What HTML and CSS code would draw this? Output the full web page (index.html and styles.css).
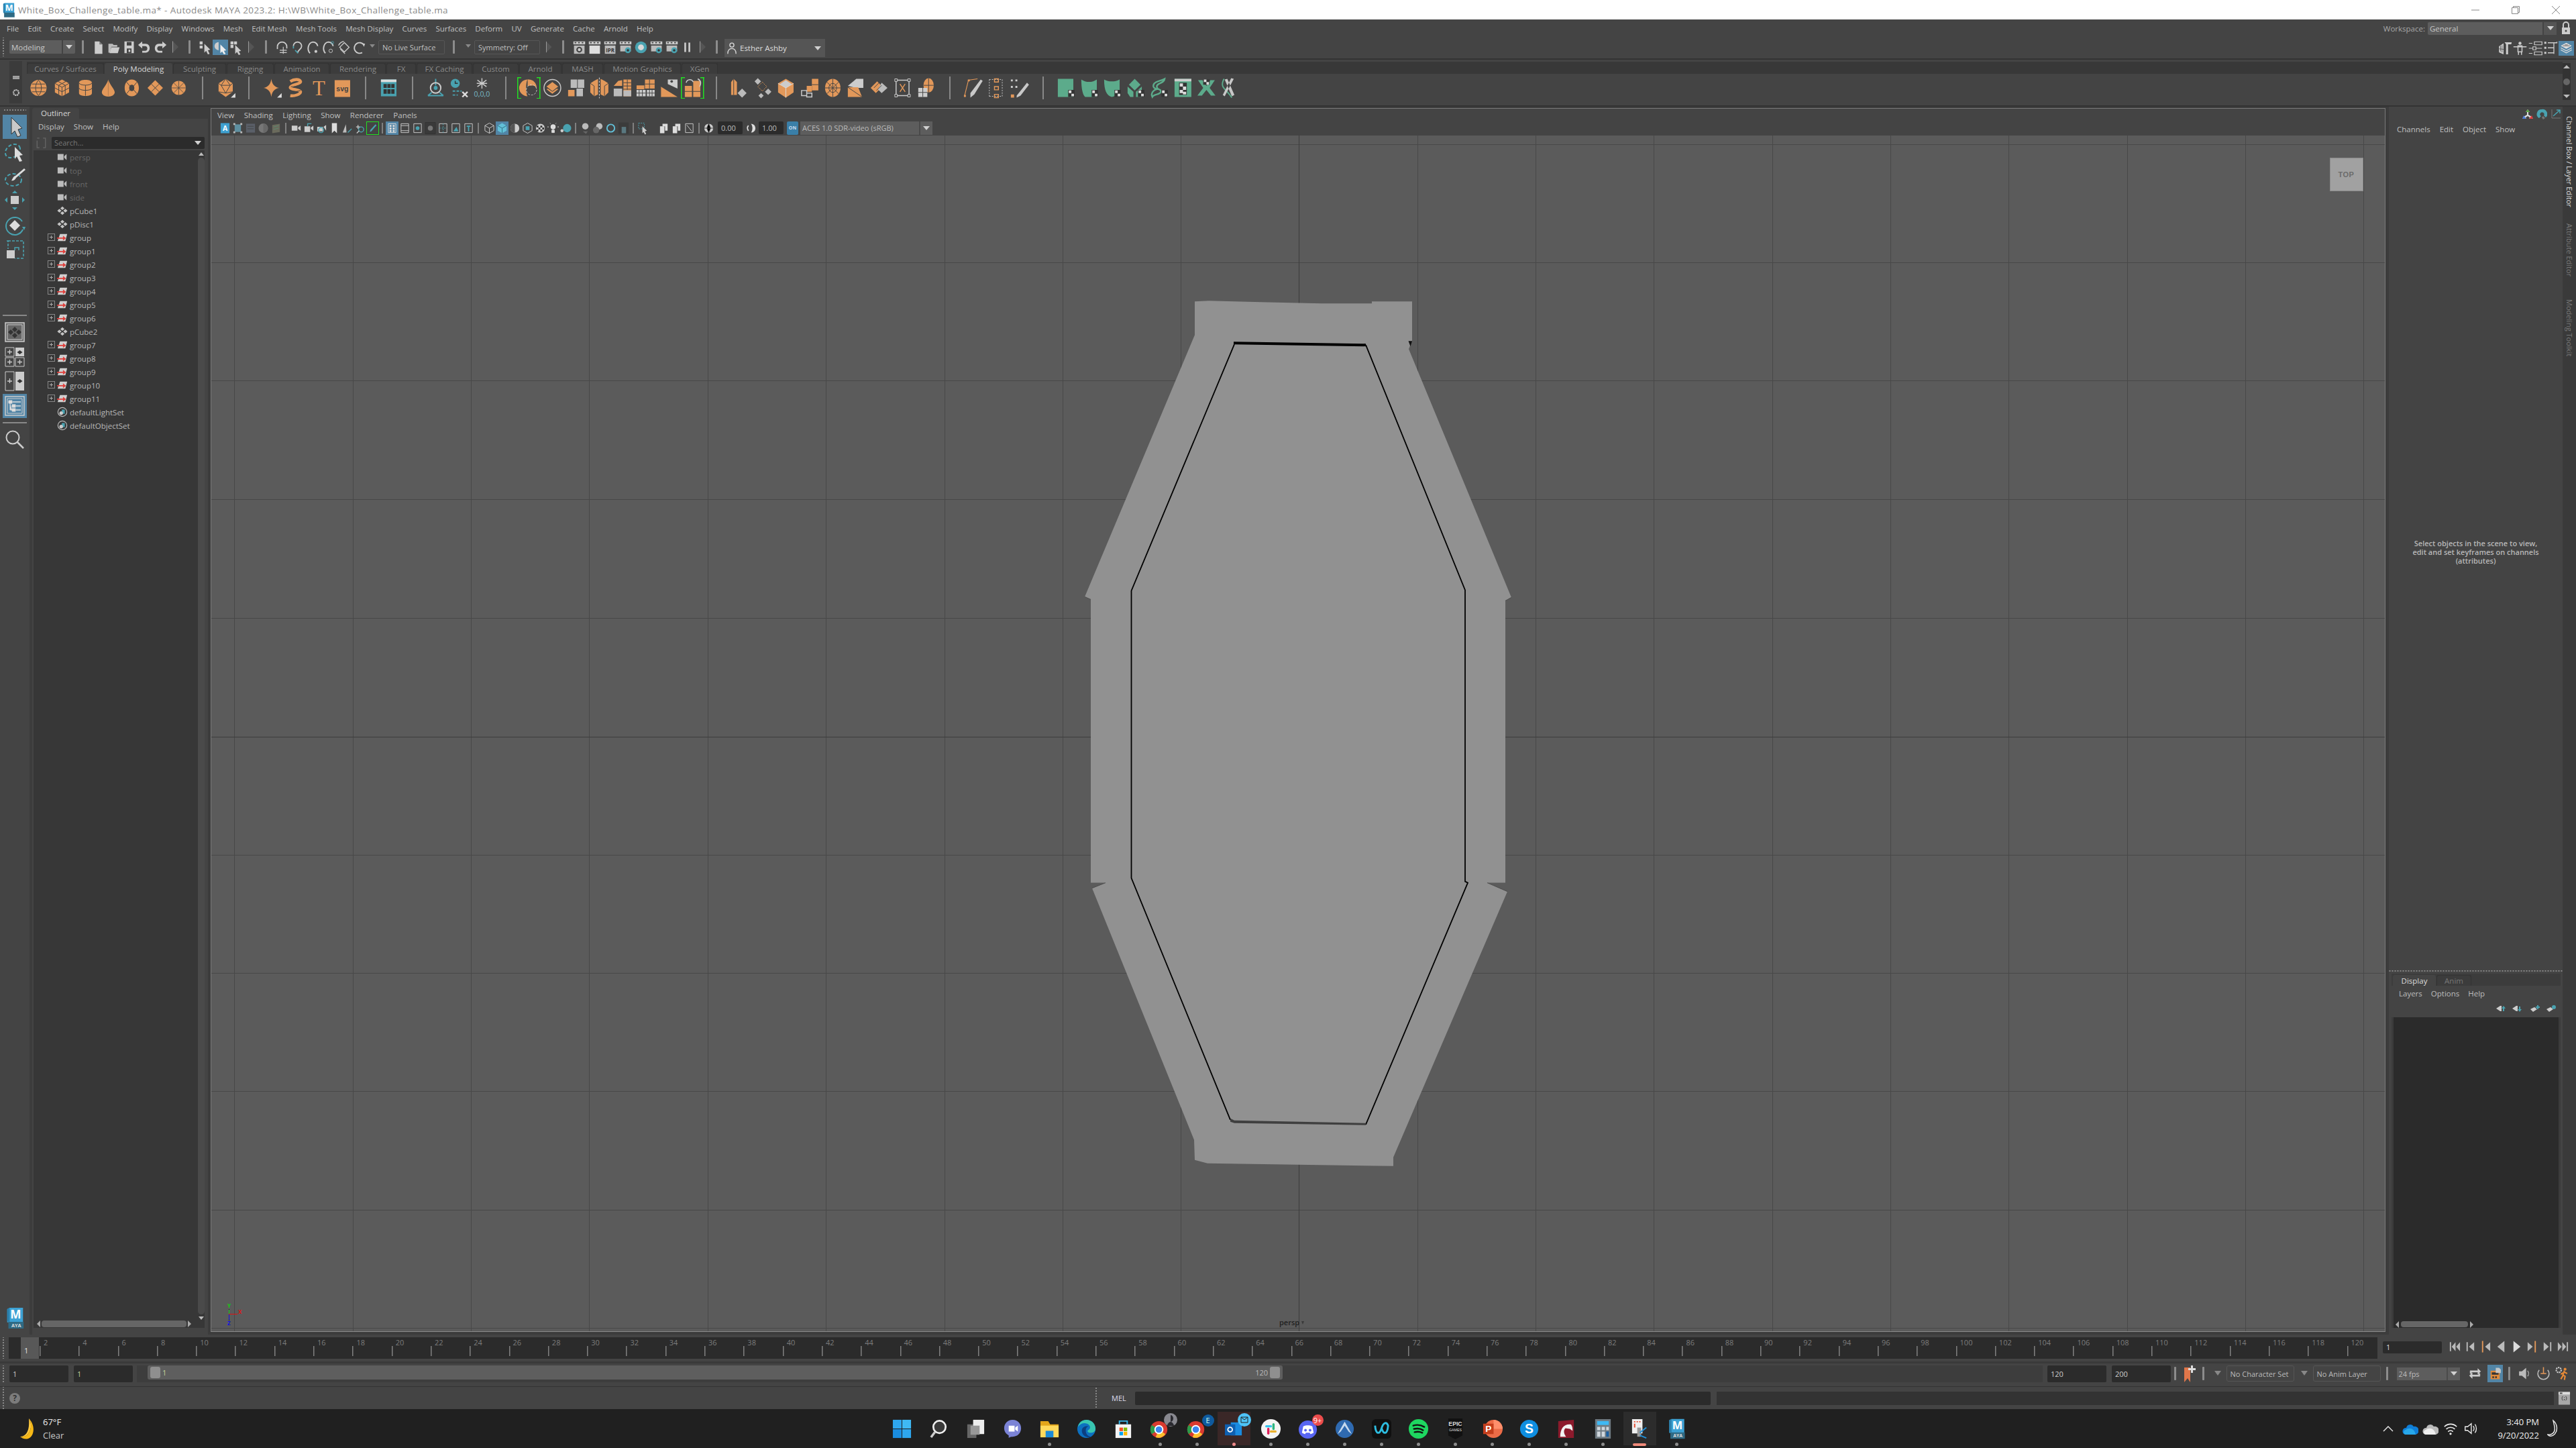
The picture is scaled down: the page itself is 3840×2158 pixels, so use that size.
FILE: index.html
```html
<!DOCTYPE html>
<html lang="en">
<head>
<meta charset="utf-8">
<title>Autodesk MAYA 2023.2</title>
<link rel="stylesheet" href="styles.css">
</head>
<body>
<svg class="defs" xmlns="http://www.w3.org/2000/svg">
<symbol id="sphere" viewBox="0 0 32 32"><circle cx="16" cy="16" r="12.5" fill="#e2985a"/><path d="M6 10h20M4 16h24M6 22h20M16 4c-6 6-6 18 0 24M16 4c6 6 6 18 0 24" fill="none" stroke="#444" stroke-width="1"/></symbol>
<symbol id="cube" viewBox="0 0 32 32"><path d="M16 3l11 6v14l-11 6-11-6V9z" fill="#e2985a"/><path d="M5 9l11 6 11-6M16 15v14M10 6l11 6v14M22 6l-11 6v14M5 16l11 6 11-6" fill="none" stroke="#444"/></symbol>
<symbol id="cyl" viewBox="0 0 32 32"><path d="M6 8c0-6 20-6 20 0v16c0 6-20 6-20 0z" fill="#e2985a"/><path d="M6 8c0 5 20 5 20 0M6 16c0 5 20 5 20 0M16 12v16" fill="none" stroke="#444"/></symbol>
<symbol id="cone" viewBox="0 0 32 32"><path d="M16 3c2 8 10 15 10 20a10 6.500 0 0 1-20 0C6 18 14 11 16 3z" fill="#e2985a"/><path d="M16 3v26" stroke="#444" stroke-width=".6" opacity=".5"/></symbol>
<symbol id="torus" viewBox="0 0 32 32"><path d="M16 3c7 0 11 6 11 13s-4 13-11 13S5 23 5 16 9 3 16 3zm0 8c-2.500 0-4 2-4 5s1.500 5 4 5 4-2 4-5-1.500-5-4-5z" fill="#e2985a" fill-rule="evenodd"/><path d="M8 7l5 6M24 7l-5 6M8 25l5-6M24 25l-5-6" stroke="#444"/></symbol>
<symbol id="plane" viewBox="0 0 32 32"><path d="M16 4l12 12-12 12L4 16z" fill="#e2985a"/><path d="M10 10l12 12M22 10L10 22" stroke="#444"/></symbol>
<symbol id="disc" viewBox="0 0 32 32"><circle cx="16" cy="16" r="11" fill="#e2985a"/><path d="M5 16h22M16 5v22M8 8l16 16M24 8L8 24" stroke="#444" stroke-width=".8"/></symbol>
<symbol id="poly" viewBox="0 0 32 32"><path d="M16 2l11 7v13l-11 8-11-8V9z" fill="#e2985a"/><path d="M16 2l-7 10 7 12 7-12zM5 9l4 3M27 9l-4 3M5 22l11 2 11-2M9 12h14" fill="none" stroke="#444"/><path d="M31 31h-7l7-7z" fill="#ddd"/></symbol>
<symbol id="star" viewBox="0 0 32 32"><path d="M15 2c1 8 5 13 12 14-7 1-11 6-12 14-1-8-5-13-12-14 7-1 11-6 12-14z" fill="#e2985a"/><path d="M31 31h-7l7-7z" fill="#ddd"/></symbol>
<symbol id="helix" viewBox="0 0 32 32"><path d="M8 6c6-4 14-4 16 0 1 4-15 5-16 9-1 4 15 3 16 7 0 4-10 7-16 6" fill="none" stroke="#e2985a" stroke-width="4.500"/><path d="M9 14c4 1 10-1 15-3M8 23c5 0 11-2 16-3" stroke="#444" fill="none"/></symbol>
<symbol id="winteal" viewBox="0 0 32 32"><rect x="4" y="3" width="24" height="26" fill="#49a2b0"/><rect x="4" y="3" width="24" height="4" fill="#ddd"/><path d="M8 10h5v6H8zM14 10h5v6h-5zM20 10h5v6h-5zM8 18h5v7H8zM14 18h5v7h-5zM20 18h5v7h-5z" fill="#333"/></symbol>
<symbol id="lattice" viewBox="0 0 32 32"><path d="M16 2v10" stroke="#49a2b0" stroke-width="2"/><circle cx="16" cy="16" r="8" fill="none" stroke="#ccc" stroke-width="2"/><circle cx="16" cy="16" r="3" fill="#49a2b0"/><path d="M4 28l6-5M28 28l-6-5M4 28h24" fill="none" stroke="#49a2b0" stroke-width="2"/></symbol>
<symbol id="clock" viewBox="0 0 32 32"><circle cx="10" cy="9" r="7" fill="#49a2b0"/><path d="M10 5v4h4" stroke="#333" fill="none" stroke-width="1.500"/><path d="M6 21h14M6 27h8" stroke="#49a2b0" stroke-width="2" stroke-dasharray="4 2"/><path d="M21 22l8 8M29 22l-8 8" stroke="#ddd" stroke-width="2.500"/></symbol>
<symbol id="snow" viewBox="0 0 32 32"><path d="M16 1v16M9 4l14 10M23 4L9 14M8 9h16" stroke="#ccc" stroke-width="1.500"/><text x="16" y="29" font-family="Open Sans" font-size="11" fill="#79b8c4" text-anchor="middle">0,0,0</text></symbol>
<symbol id="halfc" viewBox="0 0 32 32"><path d="M14 3a13 13 0 0 0 0 26c-3-4-3-22 0-26z" fill="#e2985a"/><path d="M14 3c8-1 14 5 14 13" fill="#e2985a"/><path d="M14 3a13 13 0 0 1 12 9l-12 1z" fill="#e2985a"/><circle cx="20" cy="19" r="8" fill="none" stroke="#ccc" stroke-dasharray="3 2"/></symbol>
<symbol id="circdia" viewBox="0 0 32 32"><circle cx="16" cy="16" r="13" fill="none" stroke="#ccc" stroke-width="1.500"/><path d="M16 7l9 7-9 7-9-7z" fill="#e2985a"/><path d="M7 18l9 7 9-7-2-1-7 5-7-5z" fill="#e2985a"/></symbol>
<symbol id="booln" viewBox="0 0 32 32"><path d="M4 19h10v10H4z" fill="#e2985a"/><path d="M8 3h10v13H8zM19 3h10v13H19zM17 17h10v12H17z" fill="#bbb"/></symbol>
<symbol id="mirror" viewBox="0 0 32 32"><path d="M8 5l6-3v24l-6 3-6-6V9z" fill="#e2985a"/><path d="M24 5l-6-3v24l6 3 6-6V9z" fill="#e2985a"/><path d="M16 0v32" stroke="#ddd" stroke-dasharray="3 2"/><path d="M2 9l6 4v16M30 9l-6 4v16" stroke="#444" fill="none"/></symbol>
<symbol id="grid1" viewBox="0 0 32 32"><path d="M3 17h13v12H3z" fill="#bbb"/><path d="M3 13h13V4l-6 1z" fill="#e2985a"/><path d="M18 3h12v26H18z" fill="#e2985a"/><path d="M18 8h12M18 13h12M18 18h12M24 3v16" stroke="#444"/><path d="M18 20h12v9H18z" fill="#bbb"/></symbol>
<symbol id="grid2" viewBox="0 0 32 32"><path d="M15 3h15v14H15z" fill="#e2985a"/><path d="M2 12h12v6H2z" fill="#e2985a"/><path d="M22 3v14M15 10h15" stroke="#444"/><path d="M2 19h14v10H2z" fill="#ccc"/><path d="M6 19v10M11 19v10M2 24h14" stroke="#444"/><path d="M18 19h12v10H18z" fill="#ccc"/><path d="M22 19v10M26 19v10M18 24h12" stroke="#444"/></symbol>
<symbol id="wedge" viewBox="0 0 32 32"><path d="M3 14l26 16H3z" fill="#e2985a"/><path d="M3 30V14" stroke="#444"/><path d="M14 3h15v14l-15-7z" fill="#ccc"/><circle cx="20" cy="6" r="2" fill="#444"/></symbol>
<symbol id="quadarr" viewBox="0 0 32 32"><path d="M4 13h11v8H4zM17 5h11v16H17zM4 22h11v8H4zM17 22h11v8H17z" fill="#e2985a"/><path d="M6 8c2-6 9-6 11-1" fill="none" stroke="#ccc" stroke-width="1.500"/><path d="M27 14c3-6 1-10-3-12" fill="none" stroke="#ccc" stroke-width="1.500"/></symbol>
<symbol id="extr" viewBox="0 0 32 32"><path d="M8 2l5 5v20H4V7z" fill="#e2985a"/><path d="M8 2v25" stroke="#444"/><path d="M21 17l7 7-7 7-7-7z" fill="#bbb"/></symbol>
<symbol id="bridge" viewBox="0 0 32 32"><path d="M9 1l5 5-5 5-5-5zM25 17l5 5-5 5-5-5zM14 24l4 4-4 4-4-4z" fill="#bbb"/><path d="M16 7l7 7-7 7-7-7z" fill="none" stroke="#e2985a" stroke-dasharray="2 1.500"/></symbol>
<symbol id="bevel" viewBox="0 0 32 32"><path d="M16 2l12 7v14l-12 8-12-8V9z" fill="#e2985a"/><path d="M16 4l9 6-9 6-9-6z" fill="#ccc"/><path d="M16 16v15M4 9l12 7 12-7" stroke="#ddd" fill="none"/></symbol>
<symbol id="combine" viewBox="0 0 32 32"><path d="M20 2h10v18H20z" fill="#e2985a"/><path d="M12 13h8v9h-8z" fill="#e2985a"/><path d="M20 11h10" stroke="#444"/><path d="M4 20h8v8H4zM12 24h8v6h-8z" fill="none" stroke="#ccc" stroke-width="1.500"/></symbol>
<symbol id="globe" viewBox="0 0 32 32"><ellipse cx="16" cy="16" rx="12" ry="14" fill="#e2985a"/><path d="M4 16h24M16 2v28M7 7l18 18M25 7L7 25" stroke="#444"/><ellipse cx="16" cy="16" rx="6" ry="7" fill="none" stroke="#444"/></symbol>
<symbol id="cut" viewBox="0 0 32 32"><path d="M4 13l13-11h11v14H17z" fill="#ccc"/><path d="M4 15h16l6 15H4z" fill="#e2985a"/><path d="M4 15l22 15" stroke="#444"/></symbol>
<symbol id="smalld" viewBox="0 0 32 32"><path d="M3 16l10-10 8 8-10 10z" fill="#e2985a"/><path d="M20 8l9 8-9 8-6-6z" fill="#bbb"/><path d="M8 16l8-8M12 20l8-8" stroke="#444"/></symbol>
<symbol id="boxdots" viewBox="0 0 32 32"><path d="M6 4h20v24H6z" fill="none" stroke="#ccc" stroke-width="1.500"/><path d="M12 10l8 12M20 10l-8 12" stroke="#e2985a" stroke-width="1.500"/><path d="M4 2h4v4H4zM24 2h4v4h-4zM4 26h4v4H4zM24 26h4v4h-4z" fill="#444" stroke="#ccc"/></symbol>
<symbol id="sgrid" viewBox="0 0 32 32"><ellipse cx="20" cy="12" rx="8" ry="11" fill="#e2985a"/><path d="M12 12h16M20 1v22" stroke="#444"/><path d="M4 16h14v14H4z" fill="#ccc"/><path d="M4 23h14M11 16v14" stroke="#444"/></symbol>
<symbol id="knife1" viewBox="0 0 32 32"><path d="M3 28l6-24 14-2" fill="none" stroke="#e2985a" stroke-width="1.200"/><path d="M12 24L28 3l3 2-13 21-6 5z" fill="#c8c8c8"/><path d="M2 27h3v3H2zM8 3h3v3H8z" fill="#e2985a"/></symbol>
<symbol id="knife2" viewBox="0 0 32 32"><path d="M6 3v26M26 3v26M6 3h20M6 29h20" fill="none" stroke="#ccc" stroke-dasharray="2 2"/><path d="M14 2h6v5h-6zM14 14h6v5h-6zM14 26h6v5h-6z" fill="none" stroke="#e2985a" stroke-width="1.500"/></symbol>
<symbol id="knife3" viewBox="0 0 32 32"><path d="M3 3h3v3H3zM10 3h3v3h-3zM3 13h3v3H3zM10 13h3v3h-3z" fill="#ccc"/><path d="M3 26h5v5H3z" fill="#e2985a"/><path d="M12 28l16-20 3 3-13 17-6 3z" fill="#c8c8c8"/></symbol>
<symbol id="g1" viewBox="0 0 32 32"><path d="M3 2h24v28H3z" fill="#5cab8b"/><path d="M19 19h10v11H19z" fill="#333"/><path d="M20 20h4v4h-4zM24 25h4v4h-4z" fill="#ddd"/></symbol>
<symbol id="g2" viewBox="0 0 32 32"><path d="M3 3c7 5 17 5 24 0v27H9c-4-3-6-14-6-27z" fill="#5cab8b"/><path d="M19 19h10v11H19z" fill="#333"/><path d="M20 20h4v4h-4zM24 25h4v4h-4z" fill="#ddd"/></symbol>
<symbol id="g3" viewBox="0 0 32 32"><path d="M3 3c7 4 17 4 24 0v19c-3 4-7 7-12 8-8-2-12-10-12-27z" fill="#5cab8b"/><path d="M19 19h10v11H19z" fill="#333"/><path d="M20 20h4v4h-4zM24 25h4v4h-4z" fill="#ddd"/></symbol>
<symbol id="g4" viewBox="0 0 32 32"><path d="M14 2l9 9-9 9-9-9zM3 14l9 8v8H7l-4-6zM25 14v16h-9v-8z" fill="#5cab8b"/><path d="M19 19h10v11H19z" fill="#333"/><path d="M20 20h4v4h-4zM24 25h4v4h-4z" fill="#ddd"/></symbol>
<symbol id="g5" viewBox="0 0 32 32"><path d="M24 2c-1 8-14 6-12 13 1 5 7 2 6 7s-10 3-13 8c-3-6 2-11 7-12-3-1-8-3-4-9 4-4 9-3 16-7z" fill="none" stroke="#5cab8b" stroke-width="2.500"/><path d="M19 19h10v11H19z" fill="#333"/><path d="M20 20h4v4h-4zM24 25h4v4h-4z" fill="#ddd"/></symbol>
<symbol id="g6" viewBox="0 0 32 32"><path d="M3 2h26v28H3z" fill="#5cab8b"/><path d="M3 2h26v4H3z" fill="#ccc"/><path d="M10 8h12v19H10z" fill="#333"/><path d="M11 9h5v5h-5zM16 14h5v5h-5zM11 19h5v5h-5zM16 22h5v4h-5z" fill="#ddd"/></symbol>
<symbol id="g7" viewBox="0 0 32 32"><path d="M2 28L11 16 3 4h7l6 9 6-9h7l-8 12 9 12h-7l-7-9-7 9z" fill="#5cab8b"/><path d="M11 3h10v8H11z" fill="#333"/><path d="M12 3h4v4h-4zM16 7h4v4h-4z" fill="#ddd"/></symbol>
<symbol id="g8" viewBox="0 0 32 32"><path d="M8 2c-8 14 4 16 12 29" fill="none" stroke="#5cab8b" stroke-width="2"/><path d="M9 3l11 26 4-2L13 2zM23 2L9 29l-3-2L19 1z" fill="#c8c8c8"/></symbol>
<symbol id="newf" viewBox="0 0 24 24"><path d="M6 2h8l5 5v16H6z" fill="#ccc"/><path d="M14 2v5h5" fill="#777"/></symbol>
<symbol id="openf" viewBox="0 0 24 24"><path d="M3 6h7l2 2h6v3H8l-2 10H3z" fill="#bbb"/><path d="M8 12h14l-3 10H5z" fill="#ccc"/></symbol>
<symbol id="savef" viewBox="0 0 24 24"><path d="M4 2h16v20H4z" fill="#ccc"/><path d="M8 3h8v6H8z" fill="#444"/><path d="M8 14h8v8H8z" fill="#444"/><path d="M11 16h3v4h-3z" fill="#ccc"/></symbol>
<symbol id="undo" viewBox="0 0 24 24"><path d="M8 6v-4L1 8l7 6v-4h5c5 0 5 8 0 8H8v3h6c9 0 9-15 0-15z" fill="#ccc"/></symbol>
<symbol id="redo" viewBox="0 0 24 24"><path d="M16 6V2l7 6-7 6v-4h-5c-5 0-5 8 0 8h5v3h-6C1 21 1 6 10 6z" fill="#ccc"/></symbol>
<symbol id="selh" viewBox="0 0 24 24"><path d="M3 2h5v5H3zM3 9h5v5H3z" fill="#ccc"/><path d="M11 6l10 10-4 1 3 6-3 1-3-6-3 3z" fill="#ccc"/></symbol>
<symbol id="selo" viewBox="0 0 24 24"><path d="M9 3a6 6 0 1 0 0 14" fill="#ccc"/><path d="M12 7l10 10-4 1 3 5-3 1-3-5-3 3z" fill="#eee"/></symbol>
<symbol id="selc" viewBox="0 0 24 24"><path d="M3 2h5v5H3zM9 2h5v5H9zM3 8h5v5H3z" fill="#ccc"/><path d="M11 8l10 10-4 1 3 5-3 1-3-5-3 3z" fill="#ccc"/></symbol>
<symbol id="snap" viewBox="0 0 24 24"><path d="M4 11a8 8 0 0 1 16 0v3" fill="none" stroke="#ccc" stroke-width="2"/><path d="M4 11v4" stroke="#ccc" stroke-width="2"/><path d="M8 17h12M14 11v12M8 21h12" stroke="#ccc" stroke-width="1.300"/></symbol>
<symbol id="snap2" viewBox="0 0 24 24"><path d="M5 10a7 7 0 0 1 14 0c0 6-7 6-7 12" fill="none" stroke="#ccc" stroke-width="2"/><path d="M5 10v4M8 17l5 5" stroke="#49a2b0" stroke-width="2"/></symbol>
<symbol id="snap3" viewBox="0 0 24 24"><path d="M7 22C1 16 4 4 12 3c5 0 8 4 8 7" fill="none" stroke="#ccc" stroke-width="2.200"/><circle cx="17" cy="19" r="2.400" fill="#ccc"/></symbol>
<symbol id="snap4" viewBox="0 0 24 24"><path d="M7 22C1 16 4 4 12 3c5 0 8 4 8 7" fill="none" stroke="#ccc" stroke-width="2.200"/><circle cx="19" cy="4" r="2" fill="none" stroke="#49a2b0"/><circle cx="16" cy="18" r="3" fill="none" stroke="#ccc"/></symbol>
<symbol id="snap5" viewBox="0 0 24 24"><path d="M5 12L13 4l8 8-8 8z" fill="none" stroke="#ccc" stroke-width="1.500"/><path d="M3 9c2-5 7-7 9-7M6 15l8 8" stroke="#ccc" stroke-width="1.500" fill="none"/></symbol>
<symbol id="snap6" viewBox="0 0 24 24"><path d="M17 21A9 9 0 1 1 20 8" fill="none" stroke="#ccc" stroke-width="2.200"/><path d="M17 5l5 1-2 5z" fill="#ccc"/></symbol>
<symbol id="rclap" viewBox="0 0 24 24"><path d="M2 2h20v5H2z" fill="#ccc"/><path d="M4 3h3v2H4zM10 3h3v2h-3zM16 3h3v2h-3z" fill="#444"/><path d="M3 9h18v14H3z" fill="#bbb"/><circle cx="12" cy="16" r="5" fill="#444"/><circle cx="12" cy="16" r="2.500" fill="#ccc"/></symbol>
<symbol id="rclap2" viewBox="0 0 24 24"><path d="M2 2h20v5H2z" fill="#ccc"/><path d="M4 3h3v2H4zM10 3h3v2h-3zM16 3h3v2h-3z" fill="#444"/><path d="M3 9h18v14H3z" fill="#ddd"/></symbol>
<symbol id="ripr" viewBox="0 0 24 24"><path d="M2 2h20v5H2z" fill="#ccc"/><path d="M4 3h3v2H4zM10 3h3v2h-3zM16 3h3v2h-3z" fill="#444"/><path d="M3 9h18v14H3z" fill="#bbb"/><text x="12" y="20" text-anchor="middle" font-size="9" font-family="Open Sans" font-weight="700" fill="#333">IPR</text></symbol>
<symbol id="rgear" viewBox="0 0 24 24"><path d="M2 2h20v5H2z" fill="#ccc"/><path d="M4 3h3v2H4zM10 3h3v2h-3zM16 3h3v2h-3z" fill="#444"/><path d="M3 9h18v10H3z" fill="#bbb"/><circle cx="16" cy="17" r="5" fill="#49a2b0"/><circle cx="16" cy="17" r="2" fill="#333"/></symbol>
<symbol id="rorb" viewBox="0 0 24 24"><circle cx="12" cy="12" r="10" fill="#49a2b0"/><circle cx="12" cy="12" r="5" fill="#d8d8d8"/></symbol>
<symbol id="pause" viewBox="0 0 24 24"><path d="M7 4h3v16H7zM14 4h3v16h-3z" fill="#ccc"/></symbol>
<symbol id="cam" viewBox="0 0 18 18"><path d="M1 4h10v10H1zM12 8l4-4v10l-4-4z" fill="currentColor"/></symbol>
<symbol id="xf" viewBox="0 0 18 18"><path d="M9 2l3.500 3L9 8 5.500 5zM4 6l3.500 3L4 12 .5 9zM14 6l3.500 3-3.500 3-3.500-3zM9 10l3.500 3L9 16l-3.500-3z" fill="#c4c4c4"/></symbol>
<symbol id="grp" viewBox="0 0 18 18"><path d="M5 3h12l-3 12H1z" fill="#d0d0d0"/><path d="M0 9h10V6l5 4-5 4v-3H0z" fill="#e0403c"/></symbol>
<symbol id="setic" viewBox="0 0 18 18"><circle cx="9" cy="9" r="7.500" fill="none" stroke="#bbb" stroke-width="1.300"/><path d="M8 5h5v7H8z" fill="#49a2b0"/><circle cx="7" cy="11" r="3" fill="#ccc"/></symbol>
<symbol id="tsel" viewBox="0 0 36 36"><path d="M13 4l16 16-6 2 4 9-5 2-4-9-5 5z" fill="#c9c9c9" stroke="#333"/></symbol>
<symbol id="tlasso" viewBox="0 0 36 36"><ellipse cx="15" cy="17" rx="12" ry="9" transform="rotate(-35 15 17)" fill="none" stroke="#49a2b0" stroke-width="2" stroke-dasharray="5 3"/><path d="M18 11l12 12-5 1 4 8-4 1-4-8-3 4z" fill="#ddd"/></symbol>
<symbol id="tpaint" viewBox="0 0 36 36"><ellipse cx="16" cy="23" rx="12" ry="9" fill="none" stroke="#49a2b0" stroke-width="2" stroke-dasharray="5 3"/><path d="M32 6l2 2-14 12c-2 4-5 5-7 4 2-2 2-6 6-7z" fill="#ddd"/></symbol>
<symbol id="tmove" viewBox="0 0 36 36"><path d="M12 11h12v12H12z" fill="#ccc"/><path d="M18 3l4 4h-8zM18 32l4-4h-8zM3 17l4-4v8zM33 17l-4-4v8z" fill="#49a2b0"/></symbol>
<symbol id="trot" viewBox="0 0 36 36"><path d="M30 24a13 13 0 1 1-1-12" fill="none" stroke="#49a2b0" stroke-width="2"/><path d="M29 20l5 0-2 5z" fill="#49a2b0"/><path d="M18 10l8 8-8 8-8-8z" fill="#ddd"/></symbol>
<symbol id="tscale" viewBox="0 0 36 36"><path d="M8 4h23v24" fill="none" stroke="#49a2b0" stroke-dasharray="4 2" stroke-width="1.500"/><path d="M6 4h2v12M31 30H18" fill="none" stroke="#49a2b0" stroke-dasharray="4 2" stroke-width="1.500"/><path d="M6 18h12v12H6z" fill="#ccc"/><path d="M18 18V14h6v4" fill="none" stroke="#49a2b0" stroke-width="1.500"/></symbol>
<symbol id="lsingle" viewBox="0 0 36 36"><path d="M4 4h28v28H4z" fill="#666" stroke="#ccc" stroke-width="1.500"/><path d="M7 7h22v22H7z" fill="none" stroke="#ccc"/><path d="M18 10l4 4-4 4-4-4zM12 14l4 4-4 4-4-4zM24 14l4 4-4 4-4-4zM18 19l4 4-4 4-4-4z" fill="#333"/></symbol>
<symbol id="lfour" viewBox="0 0 36 36"><path d="M4 4h13v13H4zM19 19h13v13H19zM4 19h13v13H4z" fill="#444" stroke="#ccc"/><path d="M19 4h13v13H19z" fill="#ccc"/><path d="M7 10.500h7M10.500 7v7M22 25.500h7M25.500 22v7M7 25.500h7M10.500 22v7" stroke="#ccc" stroke-width="1.300"/><path d="M25.500 8l4 3-4 3-4-3z" fill="#333"/></symbol>
<symbol id="ltwo" viewBox="0 0 36 36"><path d="M4 4h13v28H4z" fill="#444" stroke="#ccc"/><path d="M19 4h13v28H19z" fill="#ccc"/><path d="M7 18h7M10.500 14v7" stroke="#ccc" stroke-width="1.300"/><path d="M25.500 15l4 3-4 3-4-3z" fill="#333"/></symbol>
<symbol id="lout" viewBox="0 0 36 36"><path d="M4 4h28v28H4z" fill="none" stroke="#ccc" stroke-width="1.500"/><path d="M7 7h22v22H7z" fill="none" stroke="#ccc"/><path d="M9 10h5v4H9zM14 16h5v4h-5zM14 22h5v4h-5zM11 14v10h3" fill="#ddd" stroke="#ddd"/><path d="M15 12h12M20 18h7M20 24h7" stroke="#ddd" stroke-width="1.500"/></symbol>
<symbol id="mag" viewBox="0 0 36 36"><circle cx="15" cy="15" r="9.500" fill="none" stroke="#ccc" stroke-width="2"/><path d="M22 22l9 9" stroke="#ccc" stroke-width="2.500"/></symbol>
<symbol id="v-a" viewBox="0 0 18 20"><path d="M2 2h14v16H2z" fill="#3ea0d0"/><text x="9" y="14" text-anchor="middle" font-size="11" font-weight="700" font-family="Open Sans" fill="#fff">A</text></symbol>
<symbol id="v-box" viewBox="0 0 18 20"><path d="M4 4h10v12H4z" fill="#5e8fa0"/><path d="M2 2h3v3H2zM13 2h3v3h-3zM2 15h3v3H2zM13 15h3v3h-3z" fill="#bbb"/></symbol>
<symbol id="v-dim1" viewBox="0 0 18 20"><path d="M2 3h14v14H2z" fill="#5a5f68"/><path d="M4 7h10M4 11h10" stroke="#444"/></symbol>
<symbol id="v-dim2" viewBox="0 0 18 20"><circle cx="9" cy="10" r="7.500" fill="#777"/><path d="M9 3a7 7 0 0 1 0 14z" fill="#686868"/></symbol>
<symbol id="v-dim3" viewBox="0 0 18 20"><path d="M3 5l12-2v13L3 18z" fill="#6a6a5c"/><path d="M5 8l8-2M5 12l8-2" stroke="#5a8a70"/></symbol>
<symbol id="v-cam" viewBox="0 0 18 20"><path d="M2 6h9v8H2zM12 9l4-3v8l-4-3z" fill="#ccc"/></symbol>
<symbol id="v-lock" viewBox="0 0 18 20"><path d="M2 7h9v9H2zM12 9l4-3v8l-4-3z" fill="#ccc"/><path d="M7 7V3h6" fill="none" stroke="#49a2b0" stroke-width="1.500"/></symbol>
<symbol id="v-swirl" viewBox="0 0 18 20"><path d="M2 8h9v7H2zM12 8l4-3v9z" fill="#ccc"/><circle cx="8" cy="13" r="4" fill="none" stroke="#49a2b0" stroke-width="1.500"/></symbol>
<symbol id="v-book" viewBox="0 0 18 20"><path d="M5 2h8v16l-4-4-4 4z" fill="#ddd"/></symbol>
<symbol id="v-plane" viewBox="0 0 18 20"><path d="M2 17l5-13 1 13z" fill="#bbb"/><path d="M10 17l6-6" stroke="#49a2b0" stroke-width="1.500"/></symbol>
<symbol id="v-zoom" viewBox="0 0 18 20"><circle cx="11" cy="12" r="4" fill="none" stroke="#49a2b0" stroke-width="1.500"/><path d="M8 14l-4 4M3 8h6M6 5v6" stroke="#ccc" stroke-width="1.300"/></symbol>
<symbol id="v-pen" viewBox="0 0 18 20"><path d="M4 17l1-4 9-10 2 2-9 10z" fill="#49a2b0"/></symbol>
<symbol id="v-grid" viewBox="0 0 18 20"><path d="M3 3h12v14H3z" fill="none" stroke="#ddd"/><path d="M5 5h3v3H5zM10 5h3v3h-3zM5 9h3v3H5zM10 9h3v3h-3zM5 13h3v3H5zM10 13h3v3h-3z" fill="#ddd"/></symbol>
<symbol id="v-film" viewBox="0 0 18 20"><path d="M3 3h12v14H3z" fill="none" stroke="#ccc"/><path d="M3 6h12M3 14h12" stroke="#ccc"/></symbol>
<symbol id="v-res" viewBox="0 0 18 20"><path d="M3 3h12v14H3z" fill="none" stroke="#ccc"/><circle cx="9" cy="10" r="3" fill="#49a2b0"/></symbol>
<symbol id="v-dark" viewBox="0 0 18 20"><path d="M1 1h16v18H1z" fill="#3a3a3a" stroke="#333"/><circle cx="9" cy="10" r="4" fill="#777"/></symbol>
<symbol id="v-gate" viewBox="0 0 18 20"><path d="M3 3h12v14H3z" fill="none" stroke="#ccc"/><path d="M3 10h12M9 3v14" stroke="#49a2b0" stroke-dasharray="2 2"/></symbol>
<symbol id="v-mount" viewBox="0 0 18 20"><path d="M3 3h12v14H3z" fill="none" stroke="#ccc"/><path d="M5 15l5-7 3 7z" fill="#49a2b0"/></symbol>
<symbol id="v-t" viewBox="0 0 18 20"><path d="M3 3h12v14H3z" fill="none" stroke="#ccc"/><path d="M6 6h6v2H10v7H8V8H6z" fill="#49a2b0"/></symbol>
<symbol id="v-wire" viewBox="0 0 18 20"><path d="M9 2l7 4v8l-7 4-7-4V6z M2 6l7 4 7-4M9 10v8" fill="none" stroke="#ccc"/></symbol>
<symbol id="v-solid" viewBox="0 0 18 20"><path d="M9 2l7 4v8l-7 4-7-4V6z" fill="#62c0d8"/><path d="M2 6l7 4 7-4M9 10v8" fill="none" stroke="#2f6f80"/></symbol>
<symbol id="v-half" viewBox="0 0 18 20"><circle cx="9" cy="10" r="7" fill="#ccc"/><path d="M9 3a7 7 0 0 0 0 14z" fill="#555"/></symbol>
<symbol id="v-tex" viewBox="0 0 18 20"><path d="M9 2l7 4v8l-7 4-7-4V6z" fill="none" stroke="#ccc"/><path d="M6 7h6v6H6z" fill="#49a2b0"/></symbol>
<symbol id="v-check" viewBox="0 0 18 20"><circle cx="9" cy="10" r="7" fill="#ccc"/><path d="M3 6h3v3H3zM9 6h3v3H9zM6 9h3v3H6zM12 9h3v3h-3zM3 12h3v3H3zM9 12h3v3H9z" fill="#333"/></symbol>
<symbol id="v-light" viewBox="0 0 18 20"><circle cx="9" cy="8" r="4" fill="#ddd"/><path d="M7 13h4v4H7zM2 8H0M18 8h-2M4 2l1 1M14 2l-1 1" stroke="#ddd" fill="#ddd"/></symbol>
<symbol id="v-teal" viewBox="0 0 18 20"><circle cx="11" cy="10" r="6.500" fill="#49a2b0"/><circle cx="3" cy="14" r="2.500" fill="#ccc"/></symbol>
<symbol id="v-sh1" viewBox="0 0 18 20"><circle cx="9" cy="7" r="5" fill="#bbb"/><path d="M5 15h8l-3 4z" fill="#666"/></symbol>
<symbol id="v-sh2" viewBox="0 0 18 20"><circle cx="11" cy="7" r="5" fill="#bbb"/><circle cx="6" cy="13" r="5" fill="#666"/></symbol>
<symbol id="v-ring" viewBox="0 0 18 20"><circle cx="9" cy="10" r="6" fill="none" stroke="#62c0d8" stroke-width="2"/></symbol>
<symbol id="v-dk2" viewBox="0 0 18 20"><path d="M1 1h16v18H1z" fill="#3b3b3b"/><path d="M6 8h7v10H6z" fill="#5a7880"/></symbol>
<symbol id="v-sel" viewBox="0 0 18 20"><path d="M2 2h9v9H2z" fill="none" stroke="#49a2b0" stroke-dasharray="2 1.500"/><path d="M8 7l7 7-3 1 2 4-2 1-2-4-2 2z" fill="#ccc"/></symbol>
<symbol id="v-two" viewBox="0 0 18 20"><path d="M3 7h7v11H3z" fill="#ddd"/><path d="M7 3h8v11h-4V7H7z" fill="#ddd"/></symbol>
<symbol id="v-res2" viewBox="0 0 18 20"><path d="M3 3h12v14H3z" fill="none" stroke="#ccc"/><path d="M5 5l8 10" stroke="#ccc"/></symbol>
<symbol id="v-aper" viewBox="0 0 18 20"><circle cx="9" cy="10" r="7" fill="#ccc"/><path d="M9 3l3 7-3 7-3-7zM2 10h14" stroke="#444"/></symbol>
<symbol id="v-gam" viewBox="0 0 18 20"><path d="M9 3a7 7 0 0 1 0 14c3-4 3-10 0-14z" fill="#ddd"/><path d="M5 6a6 6 0 0 0 0 8" fill="none" stroke="#ddd" stroke-width="2"/></symbol>
<symbol id="r-cube" viewBox="0 0 28 28"><path d="M3 10l9-6v22l-9-4z" fill="#ccc"/><path d="M6 9v11M9 8v14M3 15l9 1" stroke="#444"/><path d="M14 2h15l-2 4h-6v20h-4V6z" fill="#ccc"/></symbol>
<symbol id="r-man" viewBox="0 0 28 28"><circle cx="14" cy="4" r="3" fill="#ccc"/><path d="M1 11h26M10 9h8v12h-8zM11 21v6M17 21v6" stroke="#ccc" stroke-width="2" fill="none"/></symbol>
<symbol id="r-attr" viewBox="0 0 28 28"><path d="M1 4h7M12 1h15v6H12zM1 14h7M14 14h13M9 11h6v6H9zM1 24h7M12 21h15v6H12z" fill="none" stroke="#ccc" stroke-width="1.600"/></symbol>
<symbol id="r-tool" viewBox="0 0 28 28"><path d="M1 1h4v4H1zM1 11h4v4H1zM1 21h4v4H1z" fill="#ccc"/><path d="M8 3h18v-2M8 13h12M8 23h12M20 3v22" fill="none" stroke="#ccc" stroke-width="1.800"/></symbol>
<symbol id="r-lay" viewBox="0 0 28 28"><path d="M14 3l11 6-11 6-11-6z" fill="#ddd"/><path d="M3 13l11 6 11-6M3 17l11 6 11-6" fill="none" stroke="#ddd" stroke-width="1.600"/><path d="M7 9h14M11 7h6" stroke="#444"/></symbol>
<symbol id="lock" viewBox="0 0 16 20"><path d="M4 9V5a4 4 0 0 1 8 0v4" fill="none" stroke="#ccc" stroke-width="2"/><path d="M2 9h12v10H2z" fill="#ccc"/><circle cx="8" cy="14" r="1.500" fill="#444"/></symbol>
<symbol id="ax1" viewBox="0 0 16 16"><path d="M8 1l3 4H9v4l5 3 2 3H10l1-2-3-2-3 2 1 2H0l2-3 5-3V5H5z" fill="#ddd"/><path d="M8 1l3 4H5z" fill="#5aa640"/><path d="M0 15l2-5 4 5z" fill="#4f7fd8"/><path d="M16 15l-2-5-4 5z" fill="#e04040"/></symbol>
<symbol id="ax2" viewBox="0 0 16 16"><path d="M8 1a7 7 0 0 0-4 13l3-3a3 3 0 1 1 4-1l3 3A7 7 0 0 0 8 1z" fill="#49a2b0"/><path d="M10 11l3 3-3 2-2-3z" fill="#777"/></symbol>
<symbol id="ax3" viewBox="0 0 16 16"><path d="M2 1v13h13" fill="none" stroke="#777" stroke-width="1"/><path d="M4 11L14 2M9 2h5v5" fill="none" stroke="#49a2b0" stroke-width="1.500"/></symbol>
<symbol id="lyr1" viewBox="0 0 16 12"><path d="M1 6l6-4h2v8H7z" fill="#ccc"/><path d="M12 2l3 4h-2v4h-2V6H9z" fill="#49a2b0"/></symbol>
<symbol id="lyr2" viewBox="0 0 16 12"><path d="M1 6l6-4h2v8H7z" fill="#ccc"/><path d="M12 11l3-4h-2V3h-2v4H9z" fill="#49a2b0"/></symbol>
<symbol id="lyr3" viewBox="0 0 16 12"><path d="M1 7l6-3 4 3-6 4z" fill="#ccc"/><path d="M11 1h2v2h2v2h-2v2h-2V5H9V3h2z" fill="#49a2b0"/></symbol>
<symbol id="lyr4" viewBox="0 0 16 12"><path d="M1 7l6-3 4 3-6 4z" fill="#ccc"/><circle cx="12" cy="4" r="3" fill="#49a2b0"/></symbol>
<symbol id="pb1" viewBox="0 0 20 20"><path d="M2 3h2v14H2zM11 3v14l-6-7zM18 3v14l-6-7z" fill="#bbb"/></symbol>
<symbol id="pb2" viewBox="0 0 20 20"><path d="M4 3h2v14H4zM16 3v14L8 10z" fill="#bbb"/></symbol>
<symbol id="pb3" viewBox="0 0 20 20"><path d="M4 1h2v18H4z" fill="#e2985a"/><path d="M17 3v14L9 10z" fill="#bbb"/></symbol>
<symbol id="pb4" viewBox="0 0 20 20"><path d="M15 1v18L4 10z" fill="#bbb"/></symbol>
<symbol id="pb5" viewBox="0 0 20 20"><path d="M5 1v18l11-9z" fill="#ddd"/></symbol>
<symbol id="pb6" viewBox="0 0 20 20"><path d="M14 1h2v18h-2z" fill="#e2985a"/><path d="M3 3v14l8-7z" fill="#bbb"/></symbol>
<symbol id="pb7" viewBox="0 0 20 20"><path d="M14 3h2v14h-2zM4 3v14l8-7z" fill="#bbb"/></symbol>
<symbol id="pb8" viewBox="0 0 20 20"><path d="M16 3h2v14h-2zM2 3v14l6-7zM9 3v14l6-7z" fill="#bbb"/></symbol>
<symbol id="bmk" viewBox="0 0 20 28"><path d="M3 5h9v22l-4-6-5 6z" fill="#e0764a"/><path d="M13 2h3v4h4v3h-4v4h-3V9H9V6h4z" fill="#ddd"/></symbol>
<symbol id="loop" viewBox="0 0 20 20"><path d="M3 10V6h11V3l4 4-4 4V8H5v3M17 10v4H6v3l-4-4 4-4v3h9v-3" fill="#ccc" stroke="#ccc" stroke-width=".5"/></symbol>
<symbol id="filmx" viewBox="0 0 22 26"><path d="M3 8h16v15H3z" fill="#e08a3a"/><path d="M5 11h12v4H5zM6 18h3v3H6zM11 18h3v3h-3z" fill="#333"/><path d="M12 3h6l3 3v6h-9z" fill="#ccc" opacity=".9"/></symbol>
<symbol id="spk" viewBox="0 0 20 20"><path d="M3 7h4l6-5v16l-6-5H3z" fill="#bbb"/><path d="M15 6c2 2 2 6 0 8" stroke="#bbb" fill="none"/></symbol>
<symbol id="cloc" viewBox="0 0 20 20"><path d="M4 5a8 8 0 1 0 12 0" fill="none" stroke="#bbb" stroke-width="1.500"/><path d="M10 1v9M6 10h8" stroke="#e2985a" stroke-width="1.500"/></symbol>
<symbol id="runner" viewBox="0 0 20 20"><circle cx="5" cy="5" r="3.500" fill="none" stroke="#ccc" stroke-width="2" stroke-dasharray="2 1"/><circle cx="14" cy="4" r="2" fill="#e88a36"/><path d="M13 6l-2 6 3 2-1 5M11 9l-3 2M13 8l4 2M11 13l-3 5" stroke="#e88a36" stroke-width="2" fill="none"/></symbol>
<symbol id="scr" viewBox="0 0 20 20"><path d="M1 0h18v20H1z" fill="#a8a8a8"/><path d="M1 0h18v4H1z" fill="#ddd"/><path d="M3 1h4v2H3z" fill="#444"/><path d="M8 7c-2 0-1 3-2 3 1 0 0 3 2 3M12 7c2 0 1 3 2 3-1 0 0 3-2 3" fill="none" stroke="#333"/><path d="M10 8v1M10 11v2" stroke="#333"/></symbol>
<symbol id="mlogo" viewBox="0 0 32 36"><path d="M3 3l4-2h22v24H3z" fill="#3da2d4"/><path d="M3 3v20l4 2V1z" fill="#2a80ad"/><path d="M5 24h25v11H5z" fill="#2f6a84"/></symbol>
<symbol id="w-start" viewBox="0 0 32 32"><path d="M2 2h13.500v13.500H2z" fill="#2ea6ee"/><path d="M16.500 2H30v13.500H16.500z" fill="#3fb9f4"/><path d="M2 16.500h13.500V30H2z" fill="#1a8de0"/><path d="M16.500 16.500H30V30H16.500z" fill="#2ea6ee"/></symbol>
<symbol id="w-search" viewBox="0 0 32 32"><circle cx="17" cy="13" r="9.500" fill="#3a3a3a" stroke="#eee" stroke-width="2.800"/><path d="M10 21l-6 8" stroke="#ccc" stroke-width="3.500"/></symbol>
<symbol id="w-task" viewBox="0 0 32 32"><path d="M3 9h14v21H3z" fill="#666"/><path d="M12 2h17v22H12z" fill="#eee"/><path d="M8 11h14v14H8z" fill="#999"/></symbol>
<symbol id="w-chat" viewBox="0 0 32 32"><path d="M16 2c8 0 13 6 13 13s-5 13-13 13c-2 0-4 0-6 2v-4C6 24 3 20 3 15 3 8 8 2 16 2z" fill="#7b83d6"/><path d="M10 11h9v9h-9zM20 14l4-3v9l-4-3z" fill="#fff"/></symbol>
<symbol id="w-fold" viewBox="0 0 32 32"><path d="M2 4h12l3 5h13v20H2z" fill="#e3a51a"/><path d="M2 11h28v18H2z" fill="#ffd95c"/><path d="M10 19h12v10H10z" fill="#1a8ad8"/></symbol>
<symbol id="w-edge" viewBox="0 0 32 32"><circle cx="16" cy="16" r="14" fill="#0c70c0"/><path d="M30 16C30 7 23 2 16 2 10 2 4 6 3 13c3-5 9-7 14-5 5 2 6 7 3 9-4 2-2 5 2 5 5 0 8-2 8-6z" fill="#39c5b0"/><path d="M9 19c0-6 5-8 10-7-3 1-4 3-4 7 0 5 4 9 9 9-7 3-15-2-15-9z" fill="#0c3f80"/></symbol>
<symbol id="w-store" viewBox="0 0 32 32"><path d="M4 9h24v21H4z" fill="#f4f4f4"/><path d="M10 9V4h12v5" fill="none" stroke="#38b5e8" stroke-width="2"/><path d="M10 14h5.500v5.500H10z" fill="#f25022"/><path d="M16.500 14H22v5.500h-5.500z" fill="#7fba00"/><path d="M10 20.500h5.500V26H10z" fill="#00a4ef"/><path d="M16.500 20.500H22V26h-5.500z" fill="#ffb900"/></symbol>
<symbol id="w-chrome" viewBox="0 0 32 32"><circle cx="14" cy="17" r="13" fill="#d93a30"/><path d="M14 17L3 24a13 13 0 0 1 0-14z" fill="#2c9b49"/><path d="M14 17l10 7a13 13 0 0 1-15 5z" fill="#fbc02d"/><circle cx="14" cy="17" r="6" fill="#3a85f0" stroke="#fff" stroke-width="2"/></symbol>
<symbol id="w-outl" viewBox="0 0 32 32"><path d="M11 6h17v20H11z" fill="#1a8be0"/><path d="M2 9h16v17H2z" fill="#0f5fb0"/><circle cx="10" cy="17" r="3.500" fill="none" stroke="#fff" stroke-width="1.800"/></symbol>
<symbol id="w-slack" viewBox="0 0 32 32"><circle cx="16" cy="16" r="15" fill="#f4f4f4"/><path d="M9 12h7" stroke="#36c5f0" stroke-width="3.500" stroke-linecap="round"/><path d="M20 9v7" stroke="#2eb67d" stroke-width="3.500" stroke-linecap="round"/><path d="M16 20h7" stroke="#ecb22e" stroke-width="3.500" stroke-linecap="round"/><path d="M12 16v7" stroke="#e01e5a" stroke-width="3.500" stroke-linecap="round"/></symbol>
<symbol id="w-disc" viewBox="0 0 32 32"><circle cx="16" cy="17" r="14" fill="#5865f2"/><path d="M9 12c5-2 9-2 14 0l2 10c-2 1-3 2-5 2l-1-2h-6l-1 2c-2 0-3-1-5-2z" fill="#fff"/><circle cx="12.500" cy="18" r="2" fill="#5865f2"/><circle cx="19.500" cy="18" r="2" fill="#5865f2"/></symbol>
<symbol id="w-nord" viewBox="0 0 32 32"><circle cx="16" cy="16" r="14" fill="#2f6ab0"/><path d="M5 24L16 5l11 19-5-4-6-9-6 9z" fill="#c6d9ee"/></symbol>
<symbol id="w-webex" viewBox="0 0 32 32"><rect x="1" y="1" width="30" height="30" rx="6" fill="#101010"/><path d="M6 11c1 14 7 14 10 4s8-10 10-4c-1 14-7 14-10 4" fill="none" stroke="#2dbde0" stroke-width="3"/></symbol>
<symbol id="w-spot" viewBox="0 0 32 32"><circle cx="16" cy="16" r="15" fill="#1ed760"/><path d="M8 11c6-2 12-1 17 2M9 16c5-1 10-1 14 2M10 21c4-1 8-1 12 1" fill="none" stroke="#111" stroke-width="2.500" stroke-linecap="round"/></symbol>
<symbol id="w-epic" viewBox="0 0 32 32"><path d="M5 0h22v26l-11 6-11-6z" fill="#111"/><text x="16" y="11" text-anchor="middle" font-family="Liberation Sans" font-weight="700" font-size="9" fill="#ddd">EPIC</text><text x="16" y="20" text-anchor="middle" font-family="Liberation Sans" font-size="5.500" fill="#ddd">GAMES</text></symbol>
<symbol id="w-ppt" viewBox="0 0 32 32"><circle cx="18" cy="16" r="14" fill="#ed6c47"/><path d="M18 2a14 14 0 0 1 14 14H18z" fill="#ff8f6b"/><path d="M2 8h16v16H2z" fill="#c43e1c"/><text x="10" y="21" text-anchor="middle" font-family="Liberation Sans" font-weight="700" font-size="14" fill="#fff">P</text></symbol>
<symbol id="w-sky" viewBox="0 0 32 32"><circle cx="16" cy="16" r="14" fill="#0e8ee0"/><text x="16" y="23" text-anchor="middle" font-family="Liberation Sans" font-weight="700" font-size="20" fill="#fff">S</text></symbol>
<symbol id="w-horse" viewBox="0 0 32 32"><path d="M4 30V4l24-2v28z" fill="#8c1a2c"/><path d="M7 28c0-13 6-20 16-19 3 2 3 7 3 10l-4-3-7-1c-3 3-3 8 1 13z" fill="#f2f2f2"/></symbol>
<symbol id="w-calc" viewBox="0 0 32 32"><path d="M4 1h24v30H4z" fill="#6f7a82"/><path d="M7 4h18v6H7z" fill="#3fb9f4"/><path d="M7 13h5v5H7zM14 13h5v5h-5zM21 13h4v5h-4zM7 20h5v8H7zM14 20h5v8h-5z" fill="#cfd6dc"/><path d="M21 20h4v8h-4z" fill="#1a5ea0"/></symbol>
<symbol id="w-snip" viewBox="0 0 32 32"><path d="M4 1h16v22H4z" fill="#f0f0f0"/><path d="M7 4h2v2H7zM11 4h2v2h-2zM15 4h2v2h-2zM7 8h2v6H7z" fill="#e64a2e"/><path d="M12 14h6v14h-6z" fill="#9a9a9a"/><path d="M16 22l10-8M16 26l10 4" stroke="#1f8fd8" stroke-width="2"/></symbol>
<symbol id="w-one" viewBox="0 0 24 18"><path d="M6 8a6 6 0 0 1 11-2 5 5 0 0 1 3 12H5A5 5 0 0 1 6 8z" fill="#0f7ed8"/><path d="M5 18c-4-1-4-6 0-7 5-4 13-3 15 7z" fill="#28a8ea"/></symbol>
<symbol id="w-cld" viewBox="0 0 24 18"><path d="M6 8a6 6 0 0 1 11-2 5 5 0 0 1 3 12H5A5 5 0 0 1 6 8z" fill="#bbb"/><path d="M5 18c-4-1-4-6 0-7 5-4 13-3 15 7z" fill="#eee"/></symbol>
<symbol id="w-wifi" viewBox="0 0 24 24"><path d="M2 9a14 14 0 0 1 20 0M5 13a10 10 0 0 1 14 0M8 17a6 6 0 0 1 8 0" fill="none" stroke="#eee" stroke-width="1.800"/><circle cx="12" cy="20.500" r="1.800" fill="#eee"/></symbol>
<symbol id="w-vol" viewBox="0 0 24 24"><path d="M3 9h4l6-5v16l-6-5H3z" fill="none" stroke="#eee" stroke-width="1.500"/><path d="M16 8c2 2 2 6 0 8M19 5c3 4 3 10 0 14" fill="none" stroke="#eee" stroke-width="1.500"/></symbol>
<symbol id="w-moon" viewBox="0 0 24 36"><path d="M12 2c8 7 10 19 3 27-5 5-10 5-14 1 8 1 14-3 14-11 0-6-2-12-3-17z" fill="none" stroke="#eee" stroke-width="1.800"/></symbol>
</svg>

<div class="app">
  <header class="titlebar">
    <svg class="titlelogo" viewBox="0 0 32 36"><use href="#mlogo"/><text x="17" y="20" text-anchor="middle" font-family="Open Sans" font-weight="700" font-size="20" fill="#fff">M</text></svg>
    <span class="titletext">White_Box_Challenge_table.ma* - Autodesk MAYA 2023.2: H:\WB\White_Box_Challenge_table.ma</span>
    <div class="winbtns">
      <svg class="winb" viewBox="0 0 14 14"><path d="M1 7h12" stroke="#888"/></svg>
      <svg class="winb" viewBox="0 0 14 14"><path d="M1.500 3.500h9v9h-9zM3.500 3.500v-2h9v9h-2" fill="none" stroke="#888"/></svg>
      <svg class="winb" viewBox="0 0 14 14"><path d="M1 1l12 12M13 1L1 13" stroke="#888"/></svg>
    </div>
  </header>

  <nav class="menubar">
    <span>File</span><span>Edit</span><span>Create</span><span>Select</span><span>Modify</span><span>Display</span><span>Windows</span><span>Mesh</span><span>Edit Mesh</span><span>Mesh Tools</span><span>Mesh Display</span><span>Curves</span><span>Surfaces</span><span>Deform</span><span>UV</span><span>Generate</span><span>Cache</span><span>Arnold</span><span>Help</span>
    <div class="workspace"><span class="wslabel">Workspace:</span><div class="wscombo"><span class="wsname">General</span><span class="wsarrow"></span></div><svg class="lockic"><use href="#lock"/></svg></div>
  </nav>

  <div class="statusline">
    <i class="grip"></i>
    <div class="combo"><span>Modeling</span><b class="carrow"></b></div>
    <i class="sep w22"></i>
    <svg class="st"><use href="#newf"/></svg><svg class="st"><use href="#openf"/></svg><svg class="st"><use href="#savef"/></svg><svg class="st"><use href="#undo"/></svg><svg class="st"><use href="#redo"/></svg>
    <i class="coll w21"></i><i class="sep w23"></i>
    <svg class="st"><use href="#selh"/></svg><svg class="st on"><use href="#selo"/></svg><svg class="st"><use href="#selc"/></svg>
    <i class="coll w21"></i><i class="sep w25"></i>
    <svg class="st"><use href="#snap"/></svg><svg class="st"><use href="#snap2"/></svg><svg class="st"><use href="#snap3"/></svg><svg class="st"><use href="#snap4"/></svg><svg class="st"><use href="#snap5"/></svg><svg class="st"><use href="#snap6"/></svg>
    <b class="mini w17"></b>
    <div class="stfield w99">No Live Surface</div>
    <i class="sep w26"></i><b class="mini w18"></b>
    <div class="stfield w98">Symmetry: Off</div>
    <i class="coll w23"></i><i class="sep w24"></i>
    <svg class="st"><use href="#rclap"/></svg><svg class="st"><use href="#rclap2"/></svg><svg class="st"><use href="#ripr"/></svg><svg class="st"><use href="#rgear"/></svg><svg class="st"><use href="#rorb"/></svg><svg class="st"><use href="#rgear"/></svg><svg class="st"><use href="#rgear"/></svg><svg class="st"><use href="#pause"/></svg>
    <i class="coll w21"></i><i class="sep w24"></i>
    <div class="profile">
      <svg class="person" viewBox="0 0 16 24"><circle cx="8" cy="7" r="3.500" fill="none" stroke="#ddd" stroke-width="1.500"/><path d="M1 22c0-7 3-9 7-9s7 2 7 9" fill="none" stroke="#ddd" stroke-width="1.500"/></svg>
      <span>Esther Ashby</span><b class="parrow"></b>
    </div>
    <div class="rightic">
      <svg class="ri"><use href="#r-cube"/></svg><svg class="ri"><use href="#r-man"/></svg><svg class="ri"><use href="#r-attr"/></svg><svg class="ri"><use href="#r-tool"/></svg><svg class="ri on"><use href="#r-lay"/></svg>
    </div>
  </div>
  <div class="dk"></div>

  <section class="shelf">
    <div class="shelfhandle"><i class="hbar"></i><svg class="hgear" viewBox="0 0 16 16"><circle cx="8" cy="8" r="4.500" fill="none" stroke="#bbb" stroke-width="2.500" stroke-dasharray="2.500 .8"/></svg></div>
    <div class="shelfbody">
      <div class="shelftabs">
        <span class="t115">Curves / Surfaces</span><span class="t101 active">Poly Modeling</span><span class="t79">Sculpting</span><span class="t70">Rigging</span><span class="t81">Animation</span><span class="t83">Rendering</span><span class="t44">FX</span><span class="t82">FX Caching</span><span class="t68">Custom</span><span class="t63">Arnold</span><span class="t61">MASH</span><span class="t115">Motion Graphics</span><span class="t54">XGen</span>
      </div>
      <div class="shelficons">
        <svg class="si"><use href="#sphere"/></svg><svg class="si"><use href="#cube"/></svg><svg class="si"><use href="#cyl"/></svg><svg class="si"><use href="#cone"/></svg><svg class="si"><use href="#torus"/></svg><svg class="si"><use href="#plane"/></svg><svg class="si"><use href="#disc"/></svg>
        <i class="ssep"></i>
        <svg class="si"><use href="#poly"/></svg>
        <i class="ssep"></i>
        <svg class="si"><use href="#star"/></svg><svg class="si"><use href="#helix"/></svg>
        <svg class="si over" viewBox="0 0 32 32"><text x="16" y="27" text-anchor="middle" font-family="Liberation Serif" font-size="32" fill="#e2985a">T</text></svg>
        <svg class="si" viewBox="0 0 32 32"><rect x="4" y="4" width="24" height="26" fill="#e2985a"/><text x="16" y="21" text-anchor="middle" font-family="Liberation Sans" font-weight="700" font-size="11" fill="#444">svg</text></svg>
        <i class="ssep"></i>
        <svg class="si"><use href="#winteal"/></svg>
        <i class="ssep"></i>
        <svg class="si"><use href="#lattice"/></svg><svg class="si"><use href="#clock"/></svg><svg class="si"><use href="#snow"/></svg>
        <i class="ssep"></i>
        <svg class="si green"><use href="#halfc"/></svg><svg class="si"><use href="#circdia"/></svg><svg class="si"><use href="#booln"/></svg><svg class="si"><use href="#mirror"/></svg><svg class="si"><use href="#grid1"/></svg><svg class="si"><use href="#grid2"/></svg><svg class="si"><use href="#wedge"/></svg><svg class="si green"><use href="#quadarr"/></svg>
        <i class="ssep"></i>
        <svg class="si"><use href="#extr"/></svg><svg class="si"><use href="#bridge"/></svg><svg class="si"><use href="#bevel"/></svg><svg class="si"><use href="#combine"/></svg><svg class="si"><use href="#globe"/></svg><svg class="si"><use href="#cut"/></svg><svg class="si"><use href="#smalld"/></svg><svg class="si"><use href="#boxdots"/></svg><svg class="si"><use href="#sgrid"/></svg>
        <i class="ssep"></i>
        <svg class="si"><use href="#knife1"/></svg><svg class="si"><use href="#knife2"/></svg><svg class="si"><use href="#knife3"/></svg>
        <i class="ssep"></i>
        <svg class="si"><use href="#g1"/></svg><svg class="si"><use href="#g2"/></svg><svg class="si"><use href="#g3"/></svg><svg class="si"><use href="#g4"/></svg><svg class="si"><use href="#g5"/></svg><svg class="si"><use href="#g6"/></svg><svg class="si"><use href="#g7"/></svg><svg class="si"><use href="#g8"/></svg>
      </div>
    </div>
    <div class="shelfscroll"><i class="up"></i><i class="sdot"></i><i class="down"></i></div>
  </section>
  <div class="dk"></div>

  <main class="main">
    <aside class="toolbox">
      <i class="tgrip"></i>
      <svg class="tb on"><use href="#tsel"/></svg><svg class="tb"><use href="#tlasso"/></svg><svg class="tb"><use href="#tpaint"/></svg><svg class="tb"><use href="#tmove"/></svg><svg class="tb"><use href="#trot"/></svg><svg class="tb"><use href="#tscale"/></svg>
      <i class="tsep first"></i>
      <svg class="tb"><use href="#lsingle"/></svg><svg class="tb"><use href="#lfour"/></svg><svg class="tb"><use href="#ltwo"/></svg><svg class="tb on"><use href="#lout"/></svg>
      <i class="tsep"></i>
      <svg class="tb"><use href="#mag"/></svg>
      <svg class="mayalogo" viewBox="0 0 32 36"><use href="#mlogo"/><text x="17" y="19" text-anchor="middle" font-family="Open Sans" font-weight="700" font-size="19" fill="#fff">M</text><text x="18" y="33" text-anchor="middle" font-family="Open Sans" font-weight="700" font-size="8" fill="#ddd">AYA</text></svg>
    </aside>

    <section class="outliner">
      <div class="otabs"><span class="otab">Outliner</span></div>
      <div class="omenu"><span>Display</span><span>Show</span><span>Help</span></div>
      <div class="osearch">
        <svg class="osic" viewBox="0 0 16 18"><path d="M1 1h4M11 1h4v4M15 13v4h-4M5 17H1v-4M1 5v8M15 5v8" fill="none" stroke="#666" stroke-width="1.500"/></svg>
        <div class="sfield"><span>Search...</span><b class="sarrow"></b></div>
      </div>
      <div class="olist">
        <ul class="rows">
          <li class="dim"><svg class="oi"><use href="#cam"/></svg>persp</li>
          <li class="dim"><svg class="oi"><use href="#cam"/></svg>top</li>
          <li class="dim"><svg class="oi"><use href="#cam"/></svg>front</li>
          <li class="dim"><svg class="oi"><use href="#cam"/></svg>side</li>
          <li><svg class="oi"><use href="#xf"/></svg>pCube1</li>
          <li><svg class="oi"><use href="#xf"/></svg>pDisc1</li>
          <li class="ex"><svg class="oi"><use href="#grp"/></svg>group</li>
          <li class="ex"><svg class="oi"><use href="#grp"/></svg>group1</li>
          <li class="ex"><svg class="oi"><use href="#grp"/></svg>group2</li>
          <li class="ex"><svg class="oi"><use href="#grp"/></svg>group3</li>
          <li class="ex"><svg class="oi"><use href="#grp"/></svg>group4</li>
          <li class="ex"><svg class="oi"><use href="#grp"/></svg>group5</li>
          <li class="ex"><svg class="oi"><use href="#grp"/></svg>group6</li>
          <li><svg class="oi"><use href="#xf"/></svg>pCube2</li>
          <li class="ex"><svg class="oi"><use href="#grp"/></svg>group7</li>
          <li class="ex"><svg class="oi"><use href="#grp"/></svg>group8</li>
          <li class="ex"><svg class="oi"><use href="#grp"/></svg>group9</li>
          <li class="ex"><svg class="oi"><use href="#grp"/></svg>group10</li>
          <li class="ex"><svg class="oi"><use href="#grp"/></svg>group11</li>
          <li><svg class="oi"><use href="#setic"/></svg>defaultLightSet</li>
          <li><svg class="oi"><use href="#setic"/></svg>defaultObjectSet</li>
        </ul>
        <div class="vscroll"><i class="vup"></i><i class="vthumb"></i><i class="vdown"></i></div>
        <div class="hscroll"><i class="hl"></i><i class="hthumb"></i><i class="hr"></i></div>
      </div>
    </section>

    <section class="panel">
      <div class="pmenu"><span>View</span><span>Shading</span><span>Lighting</span><span>Show</span><span>Renderer</span><span>Panels</span></div>
      <div class="pbar">
        <svg class="pi"><use href="#v-a"/></svg><svg class="pi"><use href="#v-box"/></svg><svg class="pi"><use href="#v-dim1"/></svg><svg class="pi"><use href="#v-dim2"/></svg><svg class="pi"><use href="#v-dim3"/></svg>
        <i class="psep first"></i>
        <svg class="pi"><use href="#v-cam"/></svg><svg class="pi"><use href="#v-lock"/></svg><svg class="pi"><use href="#v-swirl"/></svg><svg class="pi"><use href="#v-book"/></svg><svg class="pi"><use href="#v-plane"/></svg><svg class="pi"><use href="#v-zoom"/></svg><svg class="pi greenp"><use href="#v-pen"/></svg>
        <i class="psep"></i>
        <svg class="pi on"><use href="#v-grid"/></svg><svg class="pi"><use href="#v-film"/></svg><svg class="pi"><use href="#v-res"/></svg><svg class="pi"><use href="#v-dark"/></svg><svg class="pi"><use href="#v-gate"/></svg><svg class="pi"><use href="#v-mount"/></svg><svg class="pi"><use href="#v-t"/></svg>
        <i class="psep p12"></i>
        <svg class="pi"><use href="#v-wire"/></svg><svg class="pi on"><use href="#v-solid"/></svg><svg class="pi"><use href="#v-half"/></svg><svg class="pi"><use href="#v-tex"/></svg><svg class="pi"><use href="#v-check"/></svg><svg class="pi"><use href="#v-light"/></svg><svg class="pi"><use href="#v-teal"/></svg>
        <i class="psep"></i>
        <svg class="pi"><use href="#v-sh1"/></svg><svg class="pi"><use href="#v-sh2"/></svg><svg class="pi"><use href="#v-ring"/></svg><svg class="pi"><use href="#v-dk2"/></svg>
        <i class="psep"></i>
        <svg class="pi"><use href="#v-sel"/></svg><i class="pgap"></i><svg class="pi"><use href="#v-two"/></svg><svg class="pi"><use href="#v-two"/></svg><svg class="pi"><use href="#v-res2"/></svg>
        <i class="psep"></i>
        <svg class="pi"><use href="#v-aper"/></svg>
        <span class="pfield pf1">0.00</span>
        <svg class="pi pg2"><use href="#v-gam"/></svg>
        <span class="pfield">1.00</span>
        <span class="pon">ON</span>
        <div class="aces"><span>ACES 1.0 SDR-video (sRGB)</span><b class="acesarrow"></b></div>
      </div>
      <div class="view">
        <svg class="canvas" viewBox="315 202 3240 1781" preserveAspectRatio="none" shape-rendering="crispEdges">
          <path class="gridl" d="M349.500 202V1983M526.500 202V1983M702.500 202V1983M878.500 202V1983M1055.500 202V1983M1231.500 202V1983M1408.500 202V1983M1584.500 202V1983M1760.500 202V1983M2113.500 202V1983M2289.500 202V1983M2465.500 202V1983M2642.500 202V1983M2818.500 202V1983M2994.500 202V1983M3171.500 202V1983M3347.500 202V1983M3523.500 202V1983M315 215.500H3555M315 391.500H3555M315 567.500H3555M315 744.500H3555M315 921.500H3555M315 1273.500H3555M315 1449.500H3555M315 1625.500H3555M315 1802.500H3555M315 1978.500H3555"/>
          <path class="gridc" d="M1936.500 202V1983M315 1097.500H3555"/>
          <path class="mesh" shape-rendering="auto" d="M1781 449L1802 448 1880 450 1970 452 2045 452 2045 449 2105 449 2105 507 2100 520 2253 890 2244 895 2244 1315 2217 1315 2247 1328 2077 1724 2077 1737 1800 1733 1781 1728 1780 1698 1628 1323 1648 1315 1626 1315 1626 893 1617 889 1781 499z"/>
          <path class="inner" shape-rendering="auto" d="M1840 513L1686.500 880V1308L1834 1668M2036 514L2184 879V1313L2188 1315 2036 1675"/>
          <path class="topline" shape-rendering="auto" d="M1839 509L2036 512 2036 516 1839 513z"/>
          <path class="botline" shape-rendering="auto" d="M1834 1666L1840 1669 2036 1673 2036 1676 1840 1673 1834 1671z"/>
          <path class="tick" shape-rendering="auto" d="M2099.500 508h5.500l-2.500 8z"/>
          <path class="tickline" shape-rendering="auto" d="M2217 1315l30 13M1648 1315l-20 8M1626 893l-9-4M2244 895l9-5"/>
          <rect class="cubeface" x="3473" y="235" width="49" height="49"/>
          <text class="cubetext" x="3497.500" y="264" text-anchor="middle">TOP</text>
          <path d="M341 1950.500V1967" stroke="#222"/>
          <path d="M341 1957.500h13" stroke="#e01010"/>
          <path d="M341 1951v6" stroke="#10d010"/>
          <path d="M341 1958v8" stroke="#1010e0"/>
          <text class="ax xr" x="355" y="1957">X</text><text class="ax yg" x="339" y="1948">Y</text><text class="ax zb" x="339" y="1974">Z</text>
          <text class="persp" x="1907" y="1974">persp</text>
          <path d="M1940 1968l4 0-2 5z" fill="#3a3a3a" shape-rendering="auto"/>
        </svg>
      </div>
    </section>

    <aside class="right">
      <div class="cbox">
        <div class="cbicons"><svg class="cbi"><use href="#ax1"/></svg><svg class="cbi"><use href="#ax2"/></svg><svg class="cbi"><use href="#ax3"/></svg></div>
        <div class="cbmenu"><span>Channels</span><span>Edit</span><span>Object</span><span>Show</span></div>
        <p class="cbmsg">Select objects in the scene to view,<br>edit and set keyframes on channels<br>(attributes)</p>
      </div>
      <div class="rgrip"></div>
      <div class="layers">
        <div class="ltabs"><span class="ltab active">Display</span><span class="ltab">Anim</span></div>
        <div class="lmenu"><span>Layers</span><span>Options</span><span>Help</span></div>
        <div class="lbtns"><svg class="lbi"><use href="#lyr1"/></svg><svg class="lbi"><use href="#lyr2"/></svg><svg class="lbi gapl"><use href="#lyr3"/></svg><svg class="lbi"><use href="#lyr4"/></svg></div>
        <div class="llist"></div>
        <div class="lscroll"><i class="hl"></i><i class="lthumb"></i><i class="hr"></i></div>
      </div>
    </aside>

    <aside class="sidetabs">
      <span class="side s1">Channel Box / Layer Editor</span>
      <span class="side s2">Attribute Editor</span>
      <span class="side s3">Modeling Toolkit</span>
    </aside>
  </main>

  <section class="timeline">
    <i class="grip"></i>
    <div class="slider">
      <span class="cur">1</span>
      <div class="ruler">
        <span class="f">2</span><span class="f">4</span><span class="f">6</span><span class="f">8</span><span class="f">10</span><span class="f">12</span><span class="f">14</span><span class="f">16</span><span class="f">18</span><span class="f">20</span><span class="f">22</span><span class="f">24</span><span class="f">26</span><span class="f">28</span><span class="f">30</span><span class="f">32</span><span class="f">34</span><span class="f">36</span><span class="f">38</span><span class="f">40</span><span class="f">42</span><span class="f">44</span><span class="f">46</span><span class="f">48</span><span class="f">50</span><span class="f">52</span><span class="f">54</span><span class="f">56</span><span class="f">58</span><span class="f">60</span><span class="f">62</span><span class="f">64</span><span class="f">66</span><span class="f">68</span><span class="f">70</span><span class="f">72</span><span class="f">74</span><span class="f">76</span><span class="f">78</span><span class="f">80</span><span class="f">82</span><span class="f">84</span><span class="f">86</span><span class="f">88</span><span class="f">90</span><span class="f">92</span><span class="f">94</span><span class="f">96</span><span class="f">98</span><span class="f">100</span><span class="f">102</span><span class="f">104</span><span class="f">106</span><span class="f">108</span><span class="f">110</span><span class="f">112</span><span class="f">114</span><span class="f">116</span><span class="f">118</span><span class="f">120</span>
      </div>
    </div>
    <span class="curfield">1</span>
    <div class="playback"><svg class="pb"><use href="#pb1"/></svg><svg class="pb"><use href="#pb2"/></svg><svg class="pb"><use href="#pb3"/></svg><svg class="pb"><use href="#pb4"/></svg><svg class="pb"><use href="#pb5"/></svg><svg class="pb"><use href="#pb6"/></svg><svg class="pb"><use href="#pb7"/></svg><svg class="pb"><use href="#pb8"/></svg></div>
  </section>
  <div class="dk3"></div>

  <section class="range">
    <i class="grip"></i>
    <span class="rf">1</span><span class="rf g8 lime">1</span>
    <div class="rtrack">
      <div class="rslider"><i class="rh"></i><span class="rs lime">1</span><span class="re">120</span><i class="rh"></i></div>
    </div>
    <span class="rf g7">120</span><span class="rf g8">200</span>
    <i class="sep w12"></i>
    <svg class="bmk"><use href="#bmk"/></svg>
    <i class="sep w22"></i>
    <b class="tridown"></b>
    <div class="rcombo">No Character Set</div>
    <b class="tridown t2"></b>
    <div class="rcombo">No Anim Layer</div>
    <i class="sep w20"></i>
    <div class="fps"><span>24 fps</span><b class="fpsarrow"></b></div>
    <svg class="rri loop"><use href="#loop"/></svg>
    <svg class="rri film"><use href="#filmx"/></svg>
    <i class="sep w20"></i>
    <svg class="rri"><use href="#spk"/></svg><svg class="rri m6"><use href="#cloc"/></svg><svg class="rri m5"><use href="#runner"/></svg>
  </section>
  <div class="dk1"></div>

  <section class="cmd">
    <i class="grip"></i>
    <div class="helpline"><span class="help">?</span></div>
    <i class="cmdgrip"></i>
    <span class="mel">MEL</span>
    <div class="cfield"></div><div class="cfield2"></div>
    <svg class="scr"><use href="#scr"/></svg>
  </section>

  <footer class="taskbar">
    <div class="weather">
      <svg class="wmoon" viewBox="0 0 24 34"><path d="M15 2c5 8 4 17-2 24-3 3-7 4-11 3 3 3 9 5 14 2 8-5 8-20-1-29z" fill="#f7b916"/><path d="M15 2c5 8 4 17-2 24-3 3-7 4-11 3 5 0 15-3 13-27z" fill="#ffc83d"/></svg>
      <div class="wtxt"><span class="w1">67°F</span><span class="w2">Clear</span></div>
    </div>
    <div class="apps">
      <div class="app-i"><svg class="ti"><use href="#w-start"/></svg></div>
      <div class="app-i"><svg class="ti"><use href="#w-search"/></svg></div>
      <div class="app-i"><svg class="ti"><use href="#w-task"/></svg></div>
      <div class="app-i"><svg class="ti"><use href="#w-chat"/></svg></div>
      <div class="app-i dot"><svg class="ti"><use href="#w-fold"/></svg></div>
      <div class="app-i"><svg class="ti"><use href="#w-edge"/></svg></div>
      <div class="app-i"><svg class="ti"><use href="#w-store"/></svg></div>
      <div class="app-i dot"><svg class="ti"><use href="#w-chrome"/></svg><svg class="tb-badge" viewBox="0 0 20 20"><circle cx="10" cy="10" r="10" fill="#88888f"/><path d="M10 3a4 5 0 0 1 0 10c-2 0-5 3-5 6h10c0-3-3-6-5-6" fill="#2a2a30"/></svg></div>
      <div class="app-i dot"><svg class="ti"><use href="#w-chrome"/></svg><span class="tb-e">E</span></div>
      <div class="app-i dot flash"><svg class="ti"><use href="#w-outl"/></svg><svg class="tb-mail" viewBox="0 0 20 20"><circle cx="10" cy="10" r="10" fill="#4fc3f7"/><path d="M5 6h10v8H5z" fill="none" stroke="#222"/><path d="M5 6l5 4 5-4" fill="none" stroke="#222"/></svg></div>
      <div class="app-i dot"><svg class="ti"><use href="#w-slack"/></svg></div>
      <div class="app-i dot"><svg class="ti"><use href="#w-disc"/></svg><span class="tb-num">9+</span></div>
      <div class="app-i dot"><svg class="ti"><use href="#w-nord"/></svg></div>
      <div class="app-i dot"><svg class="ti"><use href="#w-webex"/></svg></div>
      <div class="app-i dot"><svg class="ti"><use href="#w-spot"/></svg></div>
      <div class="app-i dot"><svg class="ti"><use href="#w-epic"/></svg></div>
      <div class="app-i dot"><svg class="ti"><use href="#w-ppt"/></svg></div>
      <div class="app-i dot"><svg class="ti"><use href="#w-sky"/></svg></div>
      <div class="app-i dot"><svg class="ti"><use href="#w-horse"/></svg></div>
      <div class="app-i dot"><svg class="ti"><use href="#w-calc"/></svg></div>
      <div class="app-i wide active"><svg class="ti"><use href="#w-snip"/></svg></div>
      <div class="app-i dot"><svg class="ti" viewBox="0 0 32 36"><use href="#mlogo"/><text x="17" y="19" text-anchor="middle" font-family="Open Sans" font-weight="700" font-size="19" fill="#fff">M</text><text x="18" y="33" text-anchor="middle" font-family="Open Sans" font-weight="700" font-size="8" fill="#ddd">AYA</text></svg></div>
    </div>
    <div class="tray">
      <svg class="chev" viewBox="0 0 16 10"><path d="M1 9l7-7 7 7" fill="none" stroke="#eee" stroke-width="1.300"/></svg>
      <svg class="ty"><use href="#w-one"/></svg><svg class="ty"><use href="#w-cld"/></svg><svg class="ty"><use href="#w-wifi"/></svg><svg class="ty"><use href="#w-vol"/></svg>
      <div class="clock"><span>3:40 PM</span><span>9/20/2022</span></div>
      <svg class="nmoon"><use href="#w-moon"/></svg>
    </div>
  </footer>
</div>
</body>
</html>
```
FILE: styles.css
```css
*{box-sizing:border-box;margin:0;padding:0}
html,body{background:#444}
body{font-family:"Open Sans","Noto Sans",sans-serif;font-size:11px;color:#bdbdbd;overflow:hidden}
.defs{display:none}
i,b{display:block;flex:none}
svg{flex:none;display:block}
.app{width:3840px;height:2158px;display:flex;flex-direction:column}

.titlebar{height:29px;flex:none;background:#fff;display:flex;align-items:center;padding-left:3px}
.titlelogo{width:20px;height:24px;margin-right:4px}
.titletext{font-size:13.5px;color:#8a8a8a;letter-spacing:.4px}
.winbtns{margin-left:auto;display:flex;gap:46px;padding-right:23px}
.winb{width:14px;height:14px}

.menubar{height:27px;flex:none;background:#444;display:flex;align-items:center;gap:13.200px;padding:0 0 1px 10px;color:#c0c0c0;font-size:11.5px}
.workspace{margin-left:auto;display:flex;align-items:center;gap:4px;padding-right:7px}
.wslabel{color:#a8a8a8}
.wscombo{width:192px;height:19px;background:#5d5d5d;display:flex;align-items:center;border-radius:2px}
.wsname{flex:1;padding-left:3px;color:#c8c8c8}
.wsarrow{width:21px;height:19px;background:#555;border-left:2px solid #444;position:relative}
.wsarrow::after,.carrow::after,.parrow::after,.sarrow::after,.acesarrow::after,.fpsarrow::after{content:"";position:absolute;border-left:5px solid transparent;border-right:5px solid transparent;border-top:6px solid #d0d0d0;left:50%;top:50%;transform:translate(-50%,-50%)}
.lockic{width:16px;height:20px;margin-left:2px}

.statusline{height:31px;flex:none;background:#444;display:flex;align-items:center;padding-bottom:3px}
.grip{width:14px;flex:none;align-self:stretch;background:radial-gradient(circle,#888 .7px,transparent 1px) 3px 2px/4px 4px repeat-y}
.combo{width:98px;height:20px;background:#5d5d5d;display:flex;align-items:center;padding-left:3px;color:#c8c8c8;font-size:11.5px;border-radius:2px}
.combo span{flex:1}
.carrow{width:20px;height:20px;border-left:2px solid #444;position:relative}
.sep{height:20px;flex:none;position:relative}
.sep::after{content:"";position:absolute;left:50%;top:0;bottom:0;width:3px;margin-left:-1.5px;background:#8c8c8c;border-radius:1px}
.coll{height:22px;flex:none;position:relative}
.coll::after{content:"";position:absolute;left:50%;top:2px;width:8px;height:18px;border-left:1px solid #999;clip-path:polygon(0 0,100% 50%,0 100%);background:#555;margin-left:-3px}
.w12{width:12px}.w17{width:17.5px}.w18{width:18px}.w20{width:20px}.w21{width:21px}.w22{width:22.500px}.w23{width:23px}.w24{width:23.500px}.w25{width:25px}.w26{width:26px}
.st{width:23px;height:23px;padding:0 1px}
.st.on{background:#5285a6}
.mini{height:8px;position:relative}
.mini::after{content:"";position:absolute;left:50%;margin-left:-4px;border-left:4px solid transparent;border-right:4px solid transparent;border-top:5px solid #888}
.stfield{height:21px;border:1px solid #565656;border-radius:2px;display:flex;align-items:center;padding-left:5px;color:#c0c0c0;font-size:11px;white-space:nowrap;overflow:hidden}
.w99{width:99px}.w98{width:98px}
.profile{width:150px;height:27px;background:#555;margin-top:3px;display:flex;align-items:center;padding-left:4px;color:#ddd;font-size:11.5px}
.person{width:14px;height:21px;margin-right:5px}
.profile span{flex:1}
.parrow{width:22px;height:20px;position:relative}
.rightic{margin-left:auto;display:flex;gap:0;align-items:center;padding-right:3px;margin-top:3px}
.ri{width:23px;height:22px;padding:0 1px}
.ri.on{background:#5285a6}
.dk{height:2px;flex:none;background:#333}
.dk3{height:3px;flex:none;background:#3a3a3a}
.dk1{height:1px;flex:none;background:#333}

.shelf{height:68px;flex:none;display:flex;background:#444}
.shelfhandle{width:19px;margin:2px 7px 3px 14px;background:#3b3b3b;display:flex;flex-direction:column;align-items:center;justify-content:space-between;padding:22px 0 9px;flex:none}
.hbar{width:10px;height:5px;border-top:1px solid #aaa;border-bottom:1px solid #aaa;background:#999}
.hgear{width:14px;height:14px}
.shelfbody{flex:1;display:flex;flex-direction:column;min-width:0}
.shelftabs{height:18px;margin-top:3px;background:#383838;display:flex;align-items:flex-end;gap:1px;flex:none}
.shelftabs span{height:16px;background:#3c3c3c;border:1px solid #333;border-bottom:0;border-radius:3px 3px 0 0;display:flex;align-items:center;justify-content:center;color:#8a8a8a;font-size:11.5px;white-space:nowrap;flex:none}
.shelftabs span.active{background:#444;color:#d6d6d6;border-color:#444}
.t115{width:115px}.t101{width:101px}.t79{width:79px}.t70{width:70px}.t81{width:82px}.t83{width:83px}.t44{width:44px}.t82{width:83px}.t68{width:68px}.t63{width:63px}.t61{width:61px}.t54{width:54px}
.shelficons{flex:1;display:flex;align-items:center;padding-bottom:5px}
.si{width:34.820px;height:32px;padding:0 2px;box-sizing:border-box}
.si.over{overflow:visible}
.si.green{background:linear-gradient(#22e022,#22e022) 0 0/6px 1.500px no-repeat,linear-gradient(#22e022,#22e022) 100% 0/6px 1.500px no-repeat,linear-gradient(#22e022,#22e022) 0 100%/6px 1.500px no-repeat,linear-gradient(#22e022,#22e022) 100% 100%/6px 1.500px no-repeat,linear-gradient(#22e022,#22e022) 0 0/1.500px 100% no-repeat,linear-gradient(#22e022,#22e022) 100% 0/1.500px 100% no-repeat}
.ssep{width:34.820px;height:34px;position:relative;flex:none}
.ssep::after{content:"";position:absolute;left:17px;top:0;bottom:0;width:2px;background:#888}
.shelfscroll{width:12px;margin:5px 8px 8px 0;background:#333;display:flex;flex-direction:column;align-items:center;justify-content:space-between;padding:3px 0;flex:none}
.up{width:0;height:0;border-left:5px solid transparent;border-right:5px solid transparent;border-bottom:5px solid #bbb}
.down{width:0;height:0;border-left:5px solid transparent;border-right:5px solid transparent;border-top:5px solid #bbb}
.sdot{width:10px;height:10px;border-radius:50%;background:#666}

.main{flex:1;min-height:0;display:flex;background:#3c3c3c}
.toolbox{width:44px;flex:none;background:#444;display:flex;flex-direction:column;align-items:center;padding-top:3px}
.tgrip{width:34px;height:6px;margin-bottom:3px;background:radial-gradient(circle,#888 .7px,transparent 1px) 0 0/4px 4px repeat-x}
.tb{width:36px;height:36px;margin-bottom:.8px}
.tb.on{background:#5285a6}
.tsep{width:36px;height:2px;background:#888;margin:5px 0 6px}
.tsep.first{margin-top:77px;margin-bottom:6px}
.mayalogo{width:29px;height:33px;margin-top:auto;margin-bottom:8px}

.outliner{width:262px;flex:none;margin-left:4px;background:#444;display:flex;flex-direction:column}
.otabs{height:18px;padding-top:2px;background:#3c3c3c;display:flex;flex:none}
.otab{width:70px;background:#444;color:#d8d8d8;text-align:center;line-height:16px;font-size:11.5px;border-radius:3px 3px 0 0}
.omenu{height:23px;flex:none;display:flex;align-items:center;gap:14px;padding-left:9px;font-size:11.5px;color:#c0c0c0}
.osearch{height:24px;flex:none;display:flex;align-items:center;padding-left:6px;padding-top:1px}
.osic{width:15px;height:16px;margin-right:8px}
.sfield{width:228px;height:18px;background:#2b2b2b;border-radius:2px;display:flex;align-items:center;padding-left:4px;color:#777}
.sfield span{flex:1}
.sarrow{width:20px;height:14px;position:relative}
.olist{flex:1;min-height:0;margin:0 5px 10px 2px;background:#373737;position:relative}
.rows{list-style:none}
.rows li{height:20px;display:flex;align-items:center;padding-left:35px;color:#b8b8b8;font-size:11.5px;position:relative}
.rows li.dim{color:#676767}
.oi{width:16px;height:16px;margin-right:3px;color:#bcbcbc}
.rows li.ex::before{content:"";position:absolute;left:21px;top:4px;width:9px;height:9px;border:1px solid #888;background:linear-gradient(#aaa,#aaa) center/5px 1px no-repeat,linear-gradient(#aaa,#aaa) center/1px 5px no-repeat}
.vscroll{position:absolute;right:0;top:0;bottom:12px;width:10px;display:flex;flex-direction:column;align-items:center;gap:3px;padding-top:3px}
.vup{width:0;height:0;border-left:4.500px solid transparent;border-right:4.500px solid transparent;border-bottom:5px solid #bbb}
.vthumb{flex:1;width:10px;background:#4a4a4a;border-radius:5px}
.vdown{width:0;height:0;border-left:4.500px solid transparent;border-right:4.500px solid transparent;border-top:5px solid #bbb}
.hscroll{position:absolute;left:0;right:0;bottom:0;height:12px;display:flex;align-items:center;gap:2px;padding:0 20px 0 5px;background:#373737}
.hl{width:0;height:0;border-top:5px solid transparent;border-bottom:5px solid transparent;border-right:5px solid #aaa;flex:none}
.hr{width:0;height:0;border-top:5px solid transparent;border-bottom:5px solid transparent;border-left:5px solid #aaa;flex:none}
.hthumb{flex:1;height:10px;background:#666;border-radius:4px}

.panel{flex:1;min-width:0;margin:2px 0 4px 4px;border:1px solid #7a7a7a;border-bottom:1px solid #8a8a8a;display:flex;flex-direction:column;background:#444}
.pmenu{height:19px;flex:none;display:flex;align-items:center;gap:14.500px;padding-left:9px;color:#c0c0c0;font-size:11.5px}
.pbar{height:21px;flex:none;display:flex;align-items:center;padding:0 0 2px 11px}
.pi{width:19px;height:20px;padding:0 1px}
.pi.on{background:#5285a6}
.pi.greenp{border:1px solid #22e022}
.psep{width:10px;height:16px;position:relative;flex:none}
.psep::after{content:"";position:absolute;left:4px;top:0;bottom:0;width:2px;background:#808080}
.psep.first{width:11px}
.psep.p12{width:12px}
.pgap{width:12px}
.pg2{margin-left:3px}
.pfield{width:37px;height:19px;background:#2b2b2b;border-radius:2px;color:#bbb;display:flex;align-items:center;padding-left:5px;font-size:11px;flex:none;margin-left:2px}
.pfield.pf1{margin-left:4px}
.pon{width:17px;height:20px;background:#3a7fa8;color:#cde;font-size:7px;font-weight:700;display:flex;align-items:center;justify-content:center;margin:0 3px 0 5px;flex:none;border-radius:2px}
.aces{width:197px;height:20px;background:#5d5d5d;display:flex;align-items:center;padding-left:3px;color:#bbb;font-size:11px;flex:none}
.aces span{flex:1;white-space:nowrap}
.acesarrow{width:20px;height:20px;position:relative;border-left:2px solid #4a4a4a}
.view{flex:1;min-height:0;position:relative;background:#5b5b5b}
.canvas{position:absolute;left:0;top:0;width:100%;height:100%}
.gridl{stroke:#484848;stroke-width:1;fill:none}
.gridc{stroke:#3c3c3c;stroke-width:1;fill:none}
.mesh{fill:#919191}
.inner{stroke:#000;stroke-width:1.800;fill:none}
.topline{fill:#000}
.botline{fill:#3f3f3f}
.tick{fill:#111}
.tickline{stroke:#4a4a4a;stroke-width:1;fill:none}
.cubeface{fill:#a1a1a1;stroke:#8a8a8a}
.cubetext{font-family:"Liberation Sans",sans-serif;font-weight:700;font-size:11px;fill:#6b6b6b;letter-spacing:.5px}
.ax{font-family:"Open Sans",sans-serif;font-size:8px;font-weight:700}
.xr{fill:#e01010}.yg{fill:#10d010}.zb{fill:#1010e0}
.persp{font-family:"Open Sans",sans-serif;font-size:11px;font-weight:600;fill:#1f1f1f}

.right{width:259px;flex:none;margin-left:5px;background:#444;display:flex;flex-direction:column}
.cbox{flex:1;min-height:0;display:flex;flex-direction:column}
.cbicons{height:23px;flex:none;display:flex;justify-content:flex-end;gap:5px;padding:3px 0 0 0;margin-right:2px}
.cbi{width:16px;height:16px}
.cbmenu{height:20px;flex:none;display:flex;align-items:center;gap:14px;padding-left:12px;font-size:11.5px;color:#c0c0c0}
.cbmsg{margin-top:601px;text-align:center;font-size:11px;font-weight:600;line-height:13px;color:#b8b8b8}
.rgrip{height:8px;flex:none;background:radial-gradient(circle,#888 .7px,transparent 1px) center/4px 4px repeat-x}
.layers{height:528px;flex:none;margin:0 3px 10px 4px;display:flex;flex-direction:column;background:#3c3c3c}
.ltabs{height:18px;flex:none;display:flex;align-items:flex-end;gap:1px}
.ltab{width:52px;height:16px;color:#777;text-align:center;line-height:15px;border:1px solid #333;border-bottom:0;border-radius:3px 3px 0 0;font-size:11.5px}
.ltab.active{width:64px;background:#444;color:#ddd;border-color:#444;margin-left:2px}
.lmenu{height:22px;flex:none;background:#444;display:flex;align-items:center;gap:13px;padding-left:11px;font-size:11.5px;color:#bdbdbd}
.lbtns{height:25px;flex:none;background:#444;display:flex;justify-content:flex-end;align-items:center;gap:8px;padding:0 6px 2px 0}
.lbi{width:16px;height:12px}
.gapl{margin-left:3px}
.llist{flex:1;min-height:0;background:#2b2b2b;margin:0 3px}
.lscroll{height:11px;flex:none;margin:0 3px;background:#2b2b2b;display:flex;align-items:center;gap:3px;padding:0 3px}
.lthumb{width:100px;height:9px;background:#666;border-radius:4px}

.sidetabs{width:20px;flex:none;background:#3a3a3a;display:flex;flex-direction:column;align-items:center;padding-top:14px}
.side{writing-mode:vertical-rl;font-size:11px;white-space:nowrap;flex:none}
.s1{color:#ddd;height:160px}
.s2{color:#777;height:113px}
.s3{color:#777}

.timeline{height:40px;flex:none;display:flex;align-items:flex-start;padding-top:4px;background:#444}
.timeline .grip{height:32px;width:13px;align-self:auto}
.slider{width:3531px;height:32px;background:#2b2b2b;display:flex;padding-left:18px;flex:none;overflow:hidden}
.cur{width:27px;height:32px;background:#585858;color:#e4e4e4;padding:13px 0 0 5px;font-size:11px;flex:none;line-height:14px}
.ruler{display:flex;flex:none}
.f{width:58.300px;height:32px;flex:none;color:#7c7c7c;font-size:11px;padding:1px 0 0 7px;line-height:14px;background:linear-gradient(#808080,#808080) 1px 13px/1.500px 15px no-repeat}
.curfield{width:88px;height:18px;background:#2b2b2b;margin:6px 0 0 8px;border-radius:2px;padding-left:5px;color:#ddd;line-height:18px;flex:none}
.playback{display:flex;margin:4px 0 0 8px}
.pb{width:23px;height:20px;padding:0 2px}

.range{height:34px;flex:none;display:flex;align-items:center;background:#444;padding-bottom:5px;padding-top:1px}
.range .grip{height:25px;align-self:auto}
.rf{width:88px;height:25px;background:#2b2b2b;border-radius:2px;flex:none;display:flex;align-items:center;padding-left:5px;color:#ccc}
.lime{color:#c2d49a}
.g8{margin-left:8px}
.g7{margin-left:7px}
.rtrack{width:2841px;height:25px;margin-left:6px;background:#3d3d3d;padding-left:16px;flex:none}
.rslider{width:1692px;height:21px;background:#5e5e5e;border-radius:3px;display:flex;align-items:center;padding:0 4px;gap:3px}
.rh{width:15px;height:17px;background:#8f8f8f;border-radius:3px;flex:none}
.rs{flex:1}
.re{color:#bbb}
.bmk{width:20px;height:28px;margin-left:5px}
.tridown{width:20px;height:10px;position:relative;flex:none;margin-right:3px}
.tridown.t2{margin-left:5px}
.tridown::after{content:"";position:absolute;left:5px;top:1px;border-left:5px solid transparent;border-right:5px solid transparent;border-top:7px solid #888}
.rcombo{width:101px;height:24px;border:1px solid #565656;border-radius:3px;display:flex;align-items:center;padding-left:5px;color:#bbb;flex:none;white-space:nowrap;overflow:hidden}
.fps{width:94px;height:19px;margin-left:4px;background:#5d5d5d;display:flex;align-items:center;padding-left:3px;color:#bbb;flex:none}
.fps span{flex:1}
.fpsarrow{width:20px;height:19px;position:relative;border-left:2px solid #4a4a4a}
.rri{width:23px;height:26px;padding:2px 1px}
.loop{margin-left:11.500px}
.film{background:#5285a6;margin-left:6.500px}
.m6{margin-left:6px}
.m5{margin-left:5px}

.cmd{height:33px;flex:none;background:#444;display:flex;align-items:center}
.cmd .grip{width:14px}
.helpline{width:1618px;flex:none;display:flex;align-items:center}
.help{width:16px;height:16px;border-radius:50%;background:#7c7c7c;color:#333;font-size:12px;font-weight:700;display:flex;align-items:center;justify-content:center}
.cmdgrip{width:4px;align-self:stretch;background:radial-gradient(circle,#888 .7px,transparent 1px) 0 0/4px 4px repeat-y}
.mel{width:35px;margin-left:21px;color:#dde;font-size:11px;flex:none}
.cfield{width:858px;height:20px;background:#2b2b2b;border-radius:2px;flex:none}
.cfield2{width:1248px;height:20px;margin-left:9px;background:#333;flex:none}
.scr{width:19px;height:20px;margin-left:6px}

.taskbar{height:58px;flex:none;background:#202020;display:flex;align-items:stretch;color:#eee}
.weather{width:1316.500px;flex:none;display:flex;align-items:center;padding-left:27px}
.wmoon{width:26px;height:34px;margin-right:11px}
.wtxt{display:flex;flex-direction:column;font-size:13px;line-height:20px}
.w2{color:#c8c8c8}
.apps{display:flex;flex:none}
.app-i{width:55px;position:relative;display:flex;align-items:center;justify-content:center}
.ti{width:31px;height:31px}
.app-i.dot::after,.app-i.wide::after{content:"";position:absolute;left:50%;bottom:3px;width:5px;height:5px;margin-left:-2.5px;border-radius:50%;background:#8d8d8d}
.app-i.flash{background:linear-gradient(#3a2727,#3a2727) center/49px 50px no-repeat}
.app-i.flash::after{background:#f08a8a}
.app-i.active{background:linear-gradient(#2c2c2c,#2c2c2c) center/49px 50px no-repeat}
.app-i.wide::after{width:20px;height:4px;margin-left:-10px;border-radius:2px;background:#f08a7a}
.tb-badge,.tb-mail{position:absolute;width:20px;height:20px;left:33px;top:6px}
.tb-e{position:absolute;left:35px;top:8px;width:18px;height:18px;border-radius:50%;background:#0e5a9e;color:#cfe;font-size:11px;text-align:center;line-height:18px}
.tb-num{position:absolute;left:34px;top:8px;width:17px;height:17px;border-radius:50%;background:#ec4c4c;color:#fff;font-size:11px;text-align:center;line-height:17px}
.tray{margin-left:auto;display:flex;align-items:center;padding-right:25px}
.chev{width:16px;height:10px;margin-right:13px}
.ty{width:24px;height:22px;margin-right:6px}
.clock{display:flex;flex-direction:column;align-items:flex-end;font-size:13px;line-height:20px;margin:0 12px 0 22px}
.nmoon{width:18px;height:30px}
```
